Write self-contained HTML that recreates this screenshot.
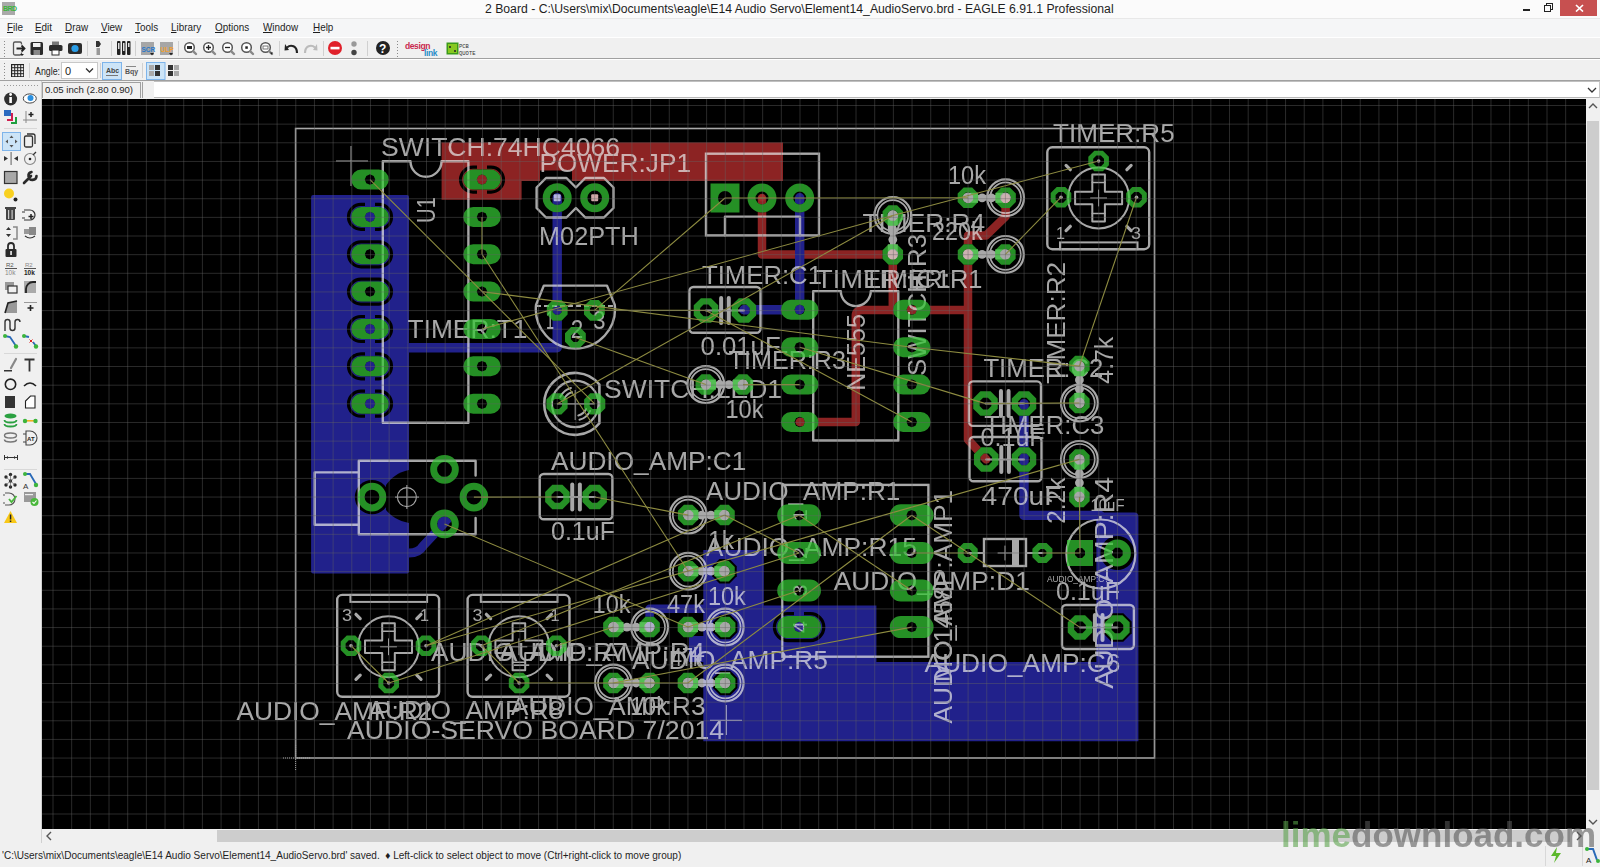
<!DOCTYPE html><html><head><meta charset="utf-8"><style>html,body{margin:0;padding:0;width:1600px;height:867px;overflow:hidden;background:#f0f0f0;font-family:"Liberation Sans",sans-serif;position:relative}</style></head><body>
<div style="position:absolute;left:0;top:0;width:1600px;height:18px;background:#fbfbfb;"></div>
<div style="position:absolute;left:2px;top:2px;width:13px;height:13px;background:#a9a9a9;"></div>
<div style="position:absolute;left:3px;top:5px;font:bold 7px 'Liberation Sans', sans-serif;color:#3cb43c;letter-spacing:-0.5px;">BRD</div>
<div style="position:absolute;left:485px;top:2px;height:16px;white-space:nowrap;font:12.5px 'Liberation Sans', sans-serif;color:#1e1e1e;transform:scaleX(0.977);transform-origin:0 0;" id="title">2 Board - C:\Users\mix\Documents\eagle\E14 Audio Servo\Element14_AudioServo.brd - EAGLE 6.91.1 Professional</div>
<div style="position:absolute;left:1523px;top:9px;width:7px;height:2px;background:#222;"></div>
<div style="position:absolute;left:1546px;top:3px;width:5px;height:5px;border:1px solid #222;"></div>
<div style="position:absolute;left:1544px;top:5px;width:5px;height:5px;border:1px solid #222;background:#fbfbfb;"></div>
<div style="position:absolute;left:1560px;top:0px;width:37px;height:16px;background:#c75050;"></div>
<svg style="position:absolute;left:1575px;top:4px" width="9" height="8"><path d="M1,1 L8,7.5 M8,1 L1,7.5" stroke="#fff" stroke-width="1.7"/></svg>
<div style="position:absolute;left:0;top:18px;width:1600px;height:19px;background:#f5f6f7;border-top:1px solid #e8e8e8;"></div>
<div style="position:absolute;left:7px;top:21px;font:11.5px 'Liberation Sans', sans-serif;color:#1e1e1e;white-space:nowrap;transform:scaleX(0.86);transform-origin:0 0;"><u style="text-decoration-thickness:1px;text-underline-offset:1px">F</u>ile</div>
<div style="position:absolute;left:35px;top:21px;font:11.5px 'Liberation Sans', sans-serif;color:#1e1e1e;white-space:nowrap;transform:scaleX(0.86);transform-origin:0 0;"><u style="text-decoration-thickness:1px;text-underline-offset:1px">E</u>dit</div>
<div style="position:absolute;left:65px;top:21px;font:11.5px 'Liberation Sans', sans-serif;color:#1e1e1e;white-space:nowrap;transform:scaleX(0.86);transform-origin:0 0;"><u style="text-decoration-thickness:1px;text-underline-offset:1px">D</u>raw</div>
<div style="position:absolute;left:101px;top:21px;font:11.5px 'Liberation Sans', sans-serif;color:#1e1e1e;white-space:nowrap;transform:scaleX(0.86);transform-origin:0 0;"><u style="text-decoration-thickness:1px;text-underline-offset:1px">V</u>iew</div>
<div style="position:absolute;left:135px;top:21px;font:11.5px 'Liberation Sans', sans-serif;color:#1e1e1e;white-space:nowrap;transform:scaleX(0.86);transform-origin:0 0;"><u style="text-decoration-thickness:1px;text-underline-offset:1px">T</u>ools</div>
<div style="position:absolute;left:171px;top:21px;font:11.5px 'Liberation Sans', sans-serif;color:#1e1e1e;white-space:nowrap;transform:scaleX(0.86);transform-origin:0 0;"><u style="text-decoration-thickness:1px;text-underline-offset:1px">L</u>ibrary</div>
<div style="position:absolute;left:215px;top:21px;font:11.5px 'Liberation Sans', sans-serif;color:#1e1e1e;white-space:nowrap;transform:scaleX(0.86);transform-origin:0 0;"><u style="text-decoration-thickness:1px;text-underline-offset:1px">O</u>ptions</div>
<div style="position:absolute;left:263px;top:21px;font:11.5px 'Liberation Sans', sans-serif;color:#1e1e1e;white-space:nowrap;transform:scaleX(0.86);transform-origin:0 0;"><u style="text-decoration-thickness:1px;text-underline-offset:1px">W</u>indow</div>
<div style="position:absolute;left:313px;top:21px;font:11.5px 'Liberation Sans', sans-serif;color:#1e1e1e;white-space:nowrap;transform:scaleX(0.86);transform-origin:0 0;"><u style="text-decoration-thickness:1px;text-underline-offset:1px">H</u>elp</div>
<div style="position:absolute;left:0;top:37px;width:1600px;height:22px;background:#f0f0f0;border-top:1px solid #fff;border-bottom:1px solid #a0a0a0;box-sizing:border-box;"></div>
<div style="position:absolute;left:0;top:59px;width:1600px;height:22px;background:#f0f0f0;border-top:1px solid #fff;border-bottom:1px solid #a0a0a0;box-sizing:border-box;"></div>
<div style="position:absolute;left:0;top:81px;width:1600px;height:18px;background:#f0f0f0;"></div>
<div style="position:absolute;left:42px;top:82px;width:99px;height:16px;background:#f0f0f0;border-top:1px solid #a0a0a0;border-left:1px solid #a0a0a0;border-right:1px solid #a0a0a0;box-sizing:border-box;"></div>
<div style="position:absolute;left:45px;top:84px;font:9.6px 'Liberation Sans', sans-serif;color:#1e1e1e;white-space:nowrap;">0.05 inch (2.80 0.90)</div>
<div style="position:absolute;left:142px;top:82px;width:12px;height:16px;background:#f0f0f0;border-left:1px solid #a0a0a0;box-sizing:border-box;"></div>
<div style="position:absolute;left:154px;top:81px;width:1446px;height:17px;background:#fff;border-top:1px solid #c0c0c0;border-bottom:1px solid #b8b8b8;border-right:1px solid #c8c8c8;box-sizing:border-box;"></div>
<svg style="position:absolute;left:1587px;top:86px" width="10" height="8"><path d="M1,2 L5,6 L9,2" stroke="#333" stroke-width="1.3" fill="none"/></svg>
<div style="position:absolute;left:0;top:81px;width:41px;height:762px;background:#f0f0f0;border-right:1px solid #d0d0d0;"></div>
<div style="position:absolute;left:4px;top:85px;width:1px;height:1px;background:#9a9a9a;"></div>
<div style="position:absolute;left:7px;top:85px;width:1px;height:1px;background:#9a9a9a;"></div>
<div style="position:absolute;left:10px;top:85px;width:1px;height:1px;background:#9a9a9a;"></div>
<div style="position:absolute;left:13px;top:85px;width:1px;height:1px;background:#9a9a9a;"></div>
<div style="position:absolute;left:16px;top:85px;width:1px;height:1px;background:#9a9a9a;"></div>
<div style="position:absolute;left:19px;top:85px;width:1px;height:1px;background:#9a9a9a;"></div>
<div style="position:absolute;left:22px;top:85px;width:1px;height:1px;background:#9a9a9a;"></div>
<div style="position:absolute;left:25px;top:85px;width:1px;height:1px;background:#9a9a9a;"></div>
<div style="position:absolute;left:28px;top:85px;width:1px;height:1px;background:#9a9a9a;"></div>
<div style="position:absolute;left:31px;top:85px;width:1px;height:1px;background:#9a9a9a;"></div>
<div style="position:absolute;left:34px;top:85px;width:1px;height:1px;background:#9a9a9a;"></div>
<div style="position:absolute;left:37px;top:85px;width:1px;height:1px;background:#9a9a9a;"></div>
<div style="position:absolute;left:42px;top:829px;width:1544px;height:14px;background:#f0f0f0;"></div>
<div style="position:absolute;left:217px;top:830px;width:1353px;height:12px;background:#cdcdcd;"></div>
<svg style="position:absolute;left:45px;top:831px" width="8" height="10"><path d="M6,1 L2,5 L6,9" stroke="#555" stroke-width="1.4" fill="none"/></svg>
<svg style="position:absolute;left:1575px;top:831px" width="8" height="10"><path d="M2,1 L6,5 L2,9" stroke="#555" stroke-width="1.4" fill="none"/></svg>
<div style="position:absolute;left:1586px;top:99px;width:14px;height:730px;background:#f0f0f0;"></div>
<div style="position:absolute;left:1587px;top:121px;width:12px;height:669px;background:#cdcdcd;"></div>
<svg style="position:absolute;left:1588px;top:102px" width="10" height="8"><path d="M1,6 L5,2 L9,6" stroke="#555" stroke-width="1.4" fill="none"/></svg>
<svg style="position:absolute;left:1588px;top:818px" width="10" height="8"><path d="M1,2 L5,6 L9,2" stroke="#555" stroke-width="1.4" fill="none"/></svg>
<div style="position:absolute;left:0;top:843px;width:1600px;height:24px;background:#f0f0f0;"></div>
<div style="position:absolute;left:2px;top:849px;font:10.5px 'Liberation Sans', sans-serif;color:#1e1e1e;white-space:nowrap;transform:scaleX(0.956);transform-origin:0 0;" id="status">'C:\Users\mix\Documents\eagle\E14 Audio Servo\Element14_AudioServo.brd' saved. &nbsp;&#9830; Left-click to select object to move (Ctrl+right-click to move group)</div>
<div style="position:absolute;left:1545px;top:846px;width:1px;height:20px;background:#d8d8d8;"></div>
<div style="position:absolute;left:1582px;top:846px;width:1px;height:20px;background:#d8d8d8;"></div>
<svg style="position:absolute;left:1549px;top:847px" width="14" height="16"><path d="M8,0 L2,9 L7,9 L5,16 L12,6 L7,6 Z" fill="#5cb82c"/></svg>
<svg style="position:absolute;left:1585px;top:846px" width="15" height="18"><path d="M2,3 L8,3 L12,14" stroke="#2a6ab8" stroke-width="2" fill="none"/><circle cx="2" cy="3" r="2" fill="#3cb43c"/><circle cx="13" cy="15" r="2" fill="#3cb43c"/><text x="1" y="17" font-size="8" font-family="Liberation Sans" fill="#222">A</text></svg>
<svg style="position:absolute;left:0;top:0" width="1600" height="867">
<rect x="4" y="41" width="1" height="1" fill="#8a8a8a"/>
<rect x="397" y="41" width="1" height="1" fill="#8a8a8a"/>
<rect x="4" y="44" width="1" height="1" fill="#8a8a8a"/>
<rect x="397" y="44" width="1" height="1" fill="#8a8a8a"/>
<rect x="4" y="47" width="1" height="1" fill="#8a8a8a"/>
<rect x="397" y="47" width="1" height="1" fill="#8a8a8a"/>
<rect x="4" y="50" width="1" height="1" fill="#8a8a8a"/>
<rect x="397" y="50" width="1" height="1" fill="#8a8a8a"/>
<rect x="4" y="53" width="1" height="1" fill="#8a8a8a"/>
<rect x="397" y="53" width="1" height="1" fill="#8a8a8a"/>
<rect x="4" y="56" width="1" height="1" fill="#8a8a8a"/>
<rect x="397" y="56" width="1" height="1" fill="#8a8a8a"/>
<rect x="4" y="63" width="1" height="1" fill="#8a8a8a"/>
<rect x="4" y="66" width="1" height="1" fill="#8a8a8a"/>
<rect x="4" y="69" width="1" height="1" fill="#8a8a8a"/>
<rect x="4" y="72" width="1" height="1" fill="#8a8a8a"/>
<rect x="4" y="75" width="1" height="1" fill="#8a8a8a"/>
<rect x="4" y="78" width="1" height="1" fill="#8a8a8a"/>
<rect x="87" y="41" width="1" height="15" fill="#d0d0d0"/>
<rect x="111" y="41" width="1" height="15" fill="#d0d0d0"/>
<rect x="135" y="41" width="1" height="15" fill="#d0d0d0"/>
<rect x="178" y="41" width="1" height="15" fill="#d0d0d0"/>
<rect x="279" y="41" width="1" height="15" fill="#d0d0d0"/>
<rect x="323" y="41" width="1" height="15" fill="#d0d0d0"/>
<rect x="367" y="41" width="1" height="15" fill="#d0d0d0"/>
<path d="M21.5,44.5 V43.5 Q21.5,42 20,42 H15 Q13.5,42 13.5,43.5 V53.5 Q13.5,55 15,55 H20 Q21.5,55 21.5,53.5 V52.5" fill="none" stroke="#555" stroke-width="1.3"/>
<path d="M16.5,48.5 H24.5 M21.5,45.5 L24.5,48.5 L21.5,51.5" fill="none" stroke="#222" stroke-width="1.8"/>
<path d="M20,54 h4 l-2,2z" fill="#222"/>
<rect x="30.5" y="42" width="12.5" height="13" rx="1.5" fill="#2b2b2b"/><rect x="33" y="43" width="7.5" height="4" fill="#f0f0f0"/><rect x="33.5" y="50" width="6.5" height="5" fill="#888"/>
<rect x="52" y="41.5" width="7" height="3.5" fill="#777"/><rect x="49" y="45" width="13.5" height="6" rx="1.5" fill="#2b2b2b"/><rect x="52" y="50" width="7" height="5" fill="#fff" stroke="#2b2b2b" stroke-width="1"/>
<rect x="68" y="43" width="14" height="11" rx="2" fill="#2b2b2b"/><circle cx="75" cy="48.5" r="3.6" fill="#2a9ee8"/>
<path d="M96,41 L99,41 L101,44 L99,47 L96,47 Z" fill="#333"/><rect x="96.5" y="48" width="3.5" height="7" fill="#999"/>
<rect x="117" y="41" width="3.5" height="14" rx="1" fill="#222"/><rect x="122" y="41" width="3.5" height="14" rx="1" fill="#222"/><rect x="127" y="41" width="3.5" height="14" rx="1" fill="#222"/>
<rect x="118" y="43" width="1.5" height="6" fill="#ddd"/><rect x="123" y="43" width="1.5" height="8" fill="#ddd"/><rect x="128" y="43" width="1.5" height="4" fill="#ddd"/>
<rect x="141" y="42" width="13" height="13" fill="#a6a6a6"/><text x="141.5" y="52" font-family="Liberation Sans" font-size="6.5" font-weight="bold" fill="#2a78c8">SCR</text><path d="M150,53 L154,53 L152,55.5Z" fill="#222"/>
<rect x="160" y="42" width="13" height="13" fill="#a6a6a6"/><text x="160.5" y="52" font-family="Liberation Sans" font-size="6.5" font-weight="bold" fill="#f0a030">ULP</text><path d="M169,53 L173,53 L171,55.5Z" fill="#222"/>
<circle cx="189.5" cy="47.5" r="4.8" fill="#fff" stroke="#555" stroke-width="1.5"/><path d="M193.3,51.3 L196.0,54.0" stroke="#888" stroke-width="2.4" stroke-linecap="round"/>
<rect x="187.0" y="46.0" width="5" height="3" fill="#222"/>
<circle cx="208.5" cy="47.5" r="4.8" fill="#fff" stroke="#555" stroke-width="1.5"/><path d="M212.3,51.3 L215.0,54.0" stroke="#888" stroke-width="2.4" stroke-linecap="round"/>
<path d="M206.0,47.5 h5 M208.5,45.0 v5" stroke="#222" stroke-width="1.3"/>
<circle cx="227.5" cy="47.5" r="4.8" fill="#fff" stroke="#555" stroke-width="1.5"/><path d="M231.3,51.3 L234.0,54.0" stroke="#888" stroke-width="2.4" stroke-linecap="round"/>
<path d="M225.0,47.5 h5" stroke="#222" stroke-width="1.3"/>
<circle cx="246.5" cy="47.5" r="4.8" fill="#fff" stroke="#555" stroke-width="1.5"/><path d="M250.3,51.3 L253.0,54.0" stroke="#888" stroke-width="2.4" stroke-linecap="round"/>
<rect x="245.3" y="46.3" width="2.5" height="2.5" fill="#222"/>
<circle cx="265.5" cy="47.5" r="4.8" fill="#fff" stroke="#555" stroke-width="1.5"/><path d="M269.3,51.3 L272.0,54.0" stroke="#888" stroke-width="2.4" stroke-linecap="round"/>
<rect x="263.0" y="46.0" width="5" height="3" fill="none" stroke="#777" stroke-width="1"/><path d="M270.0,52.5 l3,0 l-1.5,2z" fill="#222"/>
<path d="M297,53 C297,46 291,44 287,47.5" fill="none" stroke="#222" stroke-width="2.2"/><path d="M285,44 L289,50 L284.5,50.5 Z" fill="#222"/>
<path d="M305,53 C305,46 311,44 315,47.5" fill="none" stroke="#bbb" stroke-width="2.2"/><path d="M317,44 L313,50 L317.5,50.5 Z" fill="#bbb"/>
<circle cx="335" cy="48" r="7" fill="#e0202a"/><rect x="330.5" y="46.8" width="9" height="2.6" fill="#fff"/>
<circle cx="354" cy="44" r="2.7" fill="#999"/><circle cx="354" cy="52.5" r="2.7" fill="#444"/>
<circle cx="383" cy="48" r="7" fill="#222"/><text x="379" y="52.5" font-family="Liberation Sans" font-size="12" font-weight="bold" fill="#fff">?</text>
<text x="405" y="49" font-family="Liberation Sans" font-size="8.5" font-weight="bold" fill="#c8284e" letter-spacing="-0.4">design</text>
<text x="424" y="55.5" font-family="Liberation Sans" font-size="8.5" font-weight="bold" fill="#2a8ec8" letter-spacing="-0.4">link</text>
<rect x="446.5" y="42.5" width="12" height="12" fill="#3a9a1a"/><rect x="448" y="44" width="9" height="9" fill="#88c820"/><circle cx="450" cy="47" r="1" fill="#222"/><circle cx="455" cy="51" r="1" fill="#222"/>
<text x="459" y="48" font-family="Liberation Mono" font-size="5.5" fill="#333">PCB</text><text x="459" y="54.5" font-family="Liberation Mono" font-size="5.5" fill="#333">QUOTE</text>
<rect x="29" y="63" width="1" height="15" fill="#d0d0d0"/><rect x="100" y="63" width="1" height="15" fill="#d0d0d0"/><rect x="142" y="63" width="1" height="15" fill="#d0d0d0"/>
<rect x="11" y="64" width="13" height="13" fill="#222"/>
<rect x="12.2" y="65.2" width="2" height="2" fill="#f0f0f0"/>
<rect x="12.2" y="68.2" width="2" height="2" fill="#f0f0f0"/>
<rect x="12.2" y="71.2" width="2" height="2" fill="#f0f0f0"/>
<rect x="12.2" y="74.2" width="2" height="2" fill="#f0f0f0"/>
<rect x="15.2" y="65.2" width="2" height="2" fill="#f0f0f0"/>
<rect x="15.2" y="68.2" width="2" height="2" fill="#f0f0f0"/>
<rect x="15.2" y="71.2" width="2" height="2" fill="#f0f0f0"/>
<rect x="15.2" y="74.2" width="2" height="2" fill="#f0f0f0"/>
<rect x="18.2" y="65.2" width="2" height="2" fill="#f0f0f0"/>
<rect x="18.2" y="68.2" width="2" height="2" fill="#f0f0f0"/>
<rect x="18.2" y="71.2" width="2" height="2" fill="#f0f0f0"/>
<rect x="18.2" y="74.2" width="2" height="2" fill="#f0f0f0"/>
<rect x="21.2" y="65.2" width="2" height="2" fill="#f0f0f0"/>
<rect x="21.2" y="68.2" width="2" height="2" fill="#f0f0f0"/>
<rect x="21.2" y="71.2" width="2" height="2" fill="#f0f0f0"/>
<rect x="21.2" y="74.2" width="2" height="2" fill="#f0f0f0"/>
<text x="35" y="75" font-family="Liberation Sans" font-size="10.5" textLength="25" lengthAdjust="spacingAndGlyphs" fill="#1e1e1e">Angle:</text>
<rect x="61.5" y="62.5" width="36" height="16" fill="#fff" stroke="#c8c8c8" stroke-width="1"/>
<text x="65" y="75" font-family="Liberation Sans" font-size="11" fill="#1e1e1e">0</text>
<path d="M86,68.5 L89.5,72 L93,68.5" fill="none" stroke="#333" stroke-width="1.3"/>
<rect x="102.5" y="62.5" width="19" height="17" fill="#cce4f7" stroke="#7eb4ea" stroke-width="1"/>
<text x="106" y="73" font-family="Liberation Sans" font-size="7" font-weight="bold" fill="#444">Abc</text><rect x="106" y="75" width="12" height="1" fill="#777"/>
<rect x="126" y="66" width="10" height="1" fill="#888"/><text x="125" y="74" font-family="Liberation Sans" font-size="7" font-weight="bold" fill="#555">Bqy</text>
<rect x="146.5" y="62.5" width="18.5" height="17" fill="#cce4f7" stroke="#7eb4ea" stroke-width="1"/>
<rect x="149" y="65" width="5" height="5" fill="#aaa"/><rect x="155" y="65" width="5" height="5" fill="#333"/><rect x="149" y="71" width="5" height="5" fill="#aaa"/><rect x="155" y="71" width="5" height="5" fill="#333"/>
<rect x="168" y="65" width="5" height="5" fill="#333"/><rect x="174" y="65" width="5" height="5" fill="#aaa"/><rect x="168" y="71" width="5" height="5" fill="#333"/><rect x="174" y="71" width="5" height="5" fill="#aaa"/>
<circle cx="10.6" cy="99" r="6.5" fill="#2f2f2f"/><rect x="9.3" y="97" width="2.6" height="6" fill="#fff"/><circle cx="10.6" cy="94.5" r="1.4" fill="#fff"/>
<ellipse cx="29.8" cy="98.5" rx="6.5" ry="4.6" fill="#fff" stroke="#444" stroke-width="1"/><circle cx="30.5" cy="98" r="3" fill="#2a90e0"/>
<rect x="4" y="110" width="7" height="6" fill="#2a6ac0"/><path d="M12,113 L12,120 L7,120" stroke="#d02050" stroke-width="2" fill="none"/><path d="M16,117 L16,123 L11,123" stroke="#20a040" stroke-width="2" fill="none"/>
<path d="M26,111 L26,123 M23,120 L37,120" stroke="#888" stroke-width="1"/><path d="M31,112 L31,117 M28.5,114.5 L33.5,114.5" stroke="#222" stroke-width="1.5"/>
<rect x="4" y="128" width="33" height="1" fill="#d8d8d8"/><rect x="4" y="353" width="33" height="1" fill="#d8d8d8"/><rect x="4" y="469" width="33" height="1" fill="#d8d8d8"/>
<rect x="2.5" y="132.5" width="18" height="18" fill="#cce4f7" stroke="#7eb4ea" stroke-width="1"/>
<path d="M11.5,135.5 l-2,2.5 h4z M11.5,147.5 l-2,-2.5 h4z M5.5,141.5 l2.5,-2 v4z M17.5,141.5 l-2.5,-2 v4z" fill="#555"/>
<rect x="24.5" y="136" width="8" height="11" rx="1.5" fill="none" stroke="#333" stroke-width="1.3"/><path d="M27,134 h6 a2,2 0 0 1 2,2 v8" fill="none" stroke="#333" stroke-width="1.3"/>
<rect x="10.5" y="152" width="1.2" height="13" fill="#777"/><path d="M4,156 l4,2.5 l-4,2.5z M18,156 l-4,2.5 l4,2.5z" fill="#333"/>
<circle cx="30" cy="159" r="5.5" fill="none" stroke="#888" stroke-width="1.2"/><circle cx="30" cy="159" r="1.3" fill="#222"/><path d="M33,155 l3,-3" stroke="#333" stroke-width="1.2"/>
<rect x="4.5" y="171.5" width="12.5" height="12" fill="#a8a8a8" stroke="#333" stroke-width="1.2"/>
<path d="M24,183 L31,176 M31.5,172 a4,4 0 1 0 5,4" fill="none" stroke="#2a2a2a" stroke-width="2.6" stroke-linecap="round"/>
<circle cx="9" cy="193.5" r="5" fill="#f8d020"/><circle cx="15.5" cy="199.5" r="2" fill="#222"/>
<rect x="6" y="208" width="9" height="12" rx="1" fill="#444"/><rect x="5" y="207" width="11" height="2" fill="#444"/><rect x="8" y="210" width="1.2" height="9" fill="#ccc"/><rect x="11.5" y="210" width="1.2" height="9" fill="#ccc"/>
<path d="M24,210 h6 a5,5 0 0 1 0,10 h-6" fill="none" stroke="#333" stroke-width="1.2"/><path d="M22,212 h3 M22,218 h3" stroke="#333" stroke-width="1.2"/><path d="M31,214 v5 M28.5,216.5 h5" stroke="#222" stroke-width="1.5"/>
<path d="M6,230 l2.5,-3 l2.5,3z M6,234 l2.5,3 l2.5,-3z" fill="#333"/><path d="M13,227 h4 v12 h-4" fill="none" stroke="#888" stroke-width="1.5"/>
<rect x="24" y="229" width="6" height="5" fill="#999"/><rect x="29" y="227" width="7" height="8" fill="#888"/><path d="M25,236 q5,4 10,0" fill="none" stroke="#333" stroke-width="1.2"/>
<rect x="5.5" y="249" width="11" height="8" rx="1" fill="#2a2a2a"/><path d="M8,249 v-3 a3,3 0 0 1 6,0 v3" fill="none" stroke="#2a2a2a" stroke-width="1.8"/><rect x="10.3" y="251" width="1.5" height="4" fill="#fff"/>
<text x="6" y="267" font-family="Liberation Sans" font-size="6" fill="#555">R2</text><rect x="5" y="268" width="12" height="1" fill="#555"/><text x="5" y="275" font-family="Liberation Sans" font-size="6.5" fill="#888">10k</text>
<text x="25" y="267" font-family="Liberation Sans" font-size="6" fill="#888">R2</text><rect x="24" y="268" width="12" height="1" fill="#555"/><text x="24" y="275" font-family="Liberation Sans" font-size="6.5" font-weight="bold" fill="#222">10k</text>
<rect x="5" y="282" width="9" height="8" fill="#999"/><rect x="8" y="286" width="9" height="7" fill="#f0f0f0" stroke="#333" stroke-width="1.2"/>
<path d="M24,281 h12 v12 h-12z" fill="#aaa"/><path d="M26,293 v-4 a7,7 0 0 1 7,-7 h3" fill="none" stroke="#222" stroke-width="1.8"/>
<path d="M5,313 l3,-10 l9,-2 v12z" fill="#999"/><path d="M5,313 l3,-10 l9,-2" fill="none" stroke="#222" stroke-width="1.6"/>
<rect x="24" y="302" width="13" height="1" fill="#999"/><path d="M30.5,305 v6 M27.5,308 h6" stroke="#222" stroke-width="1.6"/>
<path d="M5,331 v-9 a2.5,2.5 0 0 1 5,0 v6 a2.5,2.5 0 0 0 5,0 v-6 a2.5,2.5 0 0 1 5,0" fill="none" stroke="#333" stroke-width="1.4"/>
<path d="M5,336 L10,337 L16,346" fill="none" stroke="#2a6ab8" stroke-width="1.8"/><circle cx="5" cy="336" r="2" fill="#3cb43c"/><circle cx="16" cy="346.5" r="2.2" fill="#3cb43c"/>
<path d="M24,336 L29,337 M33,342 L36,346" fill="none" stroke="#2a6ab8" stroke-width="1.8"/><circle cx="24" cy="336" r="2" fill="#3cb43c"/><circle cx="36" cy="346.5" r="2.2" fill="#3cb43c"/><path d="M29.5,339.5 l3,3 m0,-3 l-3,3" stroke="#e02020" stroke-width="1"/>
<rect x="4" y="370" width="8" height="1.5" fill="#333"/><path d="M11,368 l5,-9" stroke="#888" stroke-width="2.2" stroke-linecap="round"/>
<path d="M24.5,359.5 h10 M29.5,359.5 v12" stroke="#333" stroke-width="1.8"/>
<circle cx="10.5" cy="384.3" r="5.2" fill="none" stroke="#222" stroke-width="1.6"/><path d="M24,386 q6,-6 12,0" fill="none" stroke="#222" stroke-width="1.6"/>
<rect x="5" y="396" width="10" height="12" fill="#333"/><path d="M25.5,408 v-7 l5,-5 h4.5 v12z" fill="#fff" stroke="#222" stroke-width="1.1"/>
<ellipse cx="10.5" cy="416" rx="6" ry="2.5" fill="#2aa040"/><path d="M4.5,420 a6,2.5 0 0 0 12,0" fill="none" stroke="#2aa040" stroke-width="1.8"/><path d="M4.5,424 a6,2.5 0 0 0 12,0" fill="none" stroke="#2aa040" stroke-width="1.8"/>
<rect x="25" y="420" width="10" height="1.6" fill="#f0b020"/><circle cx="25" cy="421" r="2.2" fill="#3cb43c"/><circle cx="35.5" cy="421" r="2.2" fill="#3cb43c"/>
<ellipse cx="10.5" cy="435.5" rx="6" ry="2.5" fill="none" stroke="#777" stroke-width="1.4"/><path d="M4.5,439.5 a6,2.5 0 0 0 12,0" fill="none" stroke="#777" stroke-width="1.6"/>
<path d="M23,434 h3 M23,442 h3 M26,431 h4 a7,7 0 0 1 0,14 h-4z" fill="none" stroke="#444" stroke-width="1.1"/><text x="27" y="441" font-family="Liberation Sans" font-size="6" font-weight="bold" fill="#222">AT</text>
<path d="M5,457.5 h12 M4.5,455 v5 M17.5,455 v5" stroke="#333" stroke-width="1"/><path d="M6,457.5 l2,-1.5 v3z M16,457.5 l-2,-1.5 v3z" fill="#333"/>
<circle cx="6.0" cy="477.0" r="1.7" fill="#2a2a2a"/>
<circle cx="10.5" cy="474.5" r="1.7" fill="#2a2a2a"/>
<circle cx="15.0" cy="477.0" r="1.7" fill="#2a2a2a"/>
<circle cx="6.0" cy="485.0" r="1.7" fill="#2a2a2a"/>
<circle cx="15.0" cy="485.0" r="1.7" fill="#2a2a2a"/>
<circle cx="10.5" cy="487.0" r="1.7" fill="#2a2a2a"/>
<circle cx="10.5" cy="481.0" r="1.7" fill="#2a2a2a"/>
<path d="M6,477 L15,485 M15,477 L6,485 M10.5,474.5 v12.5" stroke="#555" stroke-width="0.6"/>
<path d="M25,474 h5 l6,10" fill="none" stroke="#2a6ab8" stroke-width="1.8"/><circle cx="25" cy="474" r="2" fill="#3cb43c"/><circle cx="36" cy="485" r="2.2" fill="#3cb43c"/><text x="23" y="489" font-family="Liberation Sans" font-size="8" fill="#333">A</text>
<path d="M5,493 h4 a6,6 0 0 1 0,12 h-4" fill="none" stroke="#555" stroke-width="1.1"/><path d="M3,495 h2 M3,503 h2" stroke="#555" stroke-width="1"/><path d="M9,499 l2.5,3 l5,-6" fill="none" stroke="#4ab83c" stroke-width="1.8"/>
<rect x="24" y="492" width="12" height="10" fill="#999"/><rect x="25" y="494" width="8" height="1.2" fill="#eee"/><circle cx="34.5" cy="502" r="4" fill="#4ab83c"/><path d="M32.5,502 l1.5,1.5 l2.5,-3" fill="none" stroke="#fff" stroke-width="1.1"/>
<path d="M10.5,511 L17,523 L4,523 Z" fill="#f8c818"/><rect x="9.8" y="514.5" width="1.5" height="5" fill="#222"/><rect x="9.8" y="520.5" width="1.5" height="1.5" fill="#222"/>
</svg>
<svg style="position:absolute;left:42px;top:99px;will-change:transform" width="1544" height="730">
<g transform="translate(-42,-99)">
<rect x="42" y="99" width="1544" height="730" rx="0" fill="#000"/>
<path d="M441.6,142.5 H783 V181 H572 V170.6 H540 V181 H521.6 V199.7 H441.6 Z" fill="#8c2323"/>
<path d="M762,198 V254.4 H892.8" stroke="#8c2323" stroke-width="8.5" fill="none" stroke-linejoin="round" stroke-linecap="round"/>
<path d="M892.8,254.4 V310 H968" stroke="#8c2323" stroke-width="8.5" fill="none" stroke-linejoin="round" stroke-linecap="round"/>
<path d="M911.8,310 H862 Q855.8,310 855.8,316 V422 H799.7" stroke="#8c2323" stroke-width="8.5" fill="none" stroke-linejoin="round" stroke-linecap="round"/>
<path d="M1005.6,197.8 V216.5 L986,235.5 H968 V439.7 L986.2,459.4" stroke="#8c2323" stroke-width="8.5" fill="none" stroke-linejoin="round" stroke-linecap="round"/>
<path d="M473,167.1 H491 A12.5,12.5 0 0 1 503.5,179.6 V179.6 A12.5,12.5 0 0 1 491,192.1 H473 A12.5,12.5 0 0 1 460.5,179.6 V179.6 A12.5,12.5 0 0 1 473,167.1Z" fill="none" stroke="#000" stroke-width="3.2"/>
<rect x="477" y="164.6" width="10" height="6" rx="0" fill="#8c2323"/>
<rect x="477" y="188.6" width="10" height="6" rx="0" fill="#8c2323"/>
<rect x="311.1" y="195" width="97.9" height="378.4" rx="2" fill="#21218b"/>
<path d="M409,470 C398,472 391,478 386,485 L386,510 C391,516 398,521 409,523 Z" fill="#000"/>
<circle cx="372" cy="497.1" r="17.2" fill="#000"/>
<path d="M444.5,523 L423,546 Q419,553 409,553" stroke="#21218b" stroke-width="9" fill="none" stroke-linejoin="round" stroke-linecap="round"/>
<path d="M409,347.8 H557.2 V197.8" stroke="#21218b" stroke-width="9.4" fill="none" stroke-linejoin="round" stroke-linecap="round"/>
<path d="M799.7,197.8 V309.8 H743.9" stroke="#21218b" stroke-width="9.4" fill="none" stroke-linejoin="round" stroke-linecap="round"/>
<path d="M1024,403.6 V515.4 H1100" stroke="#21218b" stroke-width="9.4" fill="none" stroke-linejoin="round" stroke-linecap="round"/>
<path d="M1096.4,512.6 H1134.4 Q1138.4,512.6 1138.4,516.6 V741.3 H703.3 V550.1 H763.8 V605.5 H876.4 V662 H1096.4 Z" fill="#21218b"/>
<path d="M649.6,627.1 V608.8 H703.3" stroke="#21218b" stroke-width="8.5" fill="none" stroke-linejoin="round" stroke-linecap="round"/>
<rect x="689" y="636" width="15" height="26" rx="0" fill="#21218b"/>
<path d="M719.43,558.95 L729.57,558.95 L736.75,566.13 L736.75,576.27 L729.57,583.45 L719.43,583.45 L712.25,576.27 L712.25,566.13Z" fill="#000" fill-rule="evenodd"/>
<path d="M720.13,614.85 L730.27,614.85 L737.45,622.03 L737.45,632.17 L730.27,639.35 L720.13,639.35 L712.95,632.17 L712.95,622.03Z" fill="#000" fill-rule="evenodd"/>
<path d="M720.13,670.75 L730.27,670.75 L737.45,677.93 L737.45,688.07 L730.27,695.25 L720.13,695.25 L712.95,688.07 L712.95,677.93Z" fill="#000" fill-rule="evenodd"/>
<path d="M1111.5,613.15 L1123.3,613.15 L1131.65,621.5 L1131.65,633.3 L1123.3,641.65 L1111.5,641.65 L1103.15,633.3 L1103.15,621.5Z" fill="#000" fill-rule="evenodd"/>
<circle cx="1117.4" cy="553" r="17" fill="#000"/>
<path d="M787.9,613.6 H810.3 A13.5,13.5 0 0 1 823.8,627.1 V627.1 A13.5,13.5 0 0 1 810.3,640.6 H787.9 A13.5,13.5 0 0 1 774.4,627.1 V627.1 A13.5,13.5 0 0 1 787.9,613.6Z" fill="none" stroke="#000" stroke-width="3.2"/>
<rect x="794" y="611.1" width="10" height="6" rx="0" fill="#21218b"/>
<path d="M361,204.4 H379 A12.5,12.5 0 0 1 391.5,216.9 V216.9 A12.5,12.5 0 0 1 379,229.4 H361 A12.5,12.5 0 0 1 348.5,216.9 V216.9 A12.5,12.5 0 0 1 361,204.4Z" fill="none" stroke="#000" stroke-width="3.2"/>
<rect x="365" y="201.9" width="10" height="6" rx="0" fill="#21218b"/>
<rect x="365" y="225.9" width="10" height="6" rx="0" fill="#21218b"/>
<path d="M361,241.8 H379 A12.5,12.5 0 0 1 391.5,254.3 V254.3 A12.5,12.5 0 0 1 379,266.8 H361 A12.5,12.5 0 0 1 348.5,254.3 V254.3 A12.5,12.5 0 0 1 361,241.8Z" fill="none" stroke="#000" stroke-width="3.2"/>
<path d="M361,279.1 H379 A12.5,12.5 0 0 1 391.5,291.6 V291.6 A12.5,12.5 0 0 1 379,304.1 H361 A12.5,12.5 0 0 1 348.5,291.6 V291.6 A12.5,12.5 0 0 1 361,279.1Z" fill="none" stroke="#000" stroke-width="3.2"/>
<path d="M361,316.5 H379 A12.5,12.5 0 0 1 391.5,329 V329 A12.5,12.5 0 0 1 379,341.5 H361 A12.5,12.5 0 0 1 348.5,329 V329 A12.5,12.5 0 0 1 361,316.5Z" fill="none" stroke="#000" stroke-width="3.2"/>
<rect x="365" y="314" width="10" height="6" rx="0" fill="#21218b"/>
<rect x="365" y="338" width="10" height="6" rx="0" fill="#21218b"/>
<path d="M361,353.8 H379 A12.5,12.5 0 0 1 391.5,366.3 V366.3 A12.5,12.5 0 0 1 379,378.8 H361 A12.5,12.5 0 0 1 348.5,366.3 V366.3 A12.5,12.5 0 0 1 361,353.8Z" fill="none" stroke="#000" stroke-width="3.2"/>
<rect x="365" y="351.3" width="10" height="6" rx="0" fill="#21218b"/>
<rect x="365" y="375.3" width="10" height="6" rx="0" fill="#21218b"/>
<path d="M361,391.2 H379 A12.5,12.5 0 0 1 391.5,403.7 V403.7 A12.5,12.5 0 0 1 379,416.2 H361 A12.5,12.5 0 0 1 348.5,403.7 V403.7 A12.5,12.5 0 0 1 361,391.2Z" fill="none" stroke="#000" stroke-width="3.2"/>
<rect x="365" y="388.7" width="10" height="6" rx="0" fill="#21218b"/>
<rect x="365" y="412.7" width="10" height="6" rx="0" fill="#21218b"/>
<path d="M370,248.8 L373.89,250.41 L375.5,254.3 L373.89,258.19 L370,259.8 L366.11,258.19 L364.5,254.3 L366.11,250.41Z" fill="#000" fill-rule="evenodd"/>
<path d="M370,286.1 L373.89,287.71 L375.5,291.6 L373.89,295.49 L370,297.1 L366.11,295.49 L364.5,291.6 L366.11,287.71Z" fill="#000" fill-rule="evenodd"/>
<rect x="438" y="516" width="11" height="12" rx="0" fill="#21218b" transform="rotate(45 444.5 522)"/>
<g fill="#000" fill-rule="evenodd">
<path d="M361.25,169.6 H378.75 A10,10 0 0 1 388.75,179.6 V179.6 A10,10 0 0 1 378.75,189.6 H361.25 A10,10 0 0 1 351.25,179.6 V179.6 A10,10 0 0 1 361.25,169.6ZM370,174.35 L373.71,175.89 L375.25,179.6 L373.71,183.31 L370,184.85 L366.29,183.31 L364.75,179.6 L366.29,175.89Z"/>
<path d="M361.25,206.9 H378.75 A10,10 0 0 1 388.75,216.9 V216.9 A10,10 0 0 1 378.75,226.9 H361.25 A10,10 0 0 1 351.25,216.9 V216.9 A10,10 0 0 1 361.25,206.9ZM370,211.65 L373.71,213.19 L375.25,216.9 L373.71,220.61 L370,222.15 L366.29,220.61 L364.75,216.9 L366.29,213.19Z"/>
<path d="M361.25,244.3 H378.75 A10,10 0 0 1 388.75,254.3 V254.3 A10,10 0 0 1 378.75,264.3 H361.25 A10,10 0 0 1 351.25,254.3 V254.3 A10,10 0 0 1 361.25,244.3ZM370,249.05 L373.71,250.59 L375.25,254.3 L373.71,258.01 L370,259.55 L366.29,258.01 L364.75,254.3 L366.29,250.59Z"/>
<path d="M361.25,281.6 H378.75 A10,10 0 0 1 388.75,291.6 V291.6 A10,10 0 0 1 378.75,301.6 H361.25 A10,10 0 0 1 351.25,291.6 V291.6 A10,10 0 0 1 361.25,281.6ZM370,286.35 L373.71,287.89 L375.25,291.6 L373.71,295.31 L370,296.85 L366.29,295.31 L364.75,291.6 L366.29,287.89Z"/>
<path d="M361.25,319 H378.75 A10,10 0 0 1 388.75,329 V329 A10,10 0 0 1 378.75,339 H361.25 A10,10 0 0 1 351.25,329 V329 A10,10 0 0 1 361.25,319ZM370,323.75 L373.71,325.29 L375.25,329 L373.71,332.71 L370,334.25 L366.29,332.71 L364.75,329 L366.29,325.29Z"/>
<path d="M361.25,356.3 H378.75 A10,10 0 0 1 388.75,366.3 V366.3 A10,10 0 0 1 378.75,376.3 H361.25 A10,10 0 0 1 351.25,366.3 V366.3 A10,10 0 0 1 361.25,356.3ZM370,361.05 L373.71,362.59 L375.25,366.3 L373.71,370.01 L370,371.55 L366.29,370.01 L364.75,366.3 L366.29,362.59Z"/>
<path d="M361.25,393.7 H378.75 A10,10 0 0 1 388.75,403.7 V403.7 A10,10 0 0 1 378.75,413.7 H361.25 A10,10 0 0 1 351.25,403.7 V403.7 A10,10 0 0 1 361.25,393.7ZM370,398.45 L373.71,399.99 L375.25,403.7 L373.71,407.41 L370,408.95 L366.29,407.41 L364.75,403.7 L366.29,399.99Z"/>
<path d="M473.25,169.6 H490.75 A10,10 0 0 1 500.75,179.6 V179.6 A10,10 0 0 1 490.75,189.6 H473.25 A10,10 0 0 1 463.25,179.6 V179.6 A10,10 0 0 1 473.25,169.6ZM482,174.35 L485.71,175.89 L487.25,179.6 L485.71,183.31 L482,184.85 L478.29,183.31 L476.75,179.6 L478.29,175.89Z"/>
<path d="M473.25,206.9 H490.75 A10,10 0 0 1 500.75,216.9 V216.9 A10,10 0 0 1 490.75,226.9 H473.25 A10,10 0 0 1 463.25,216.9 V216.9 A10,10 0 0 1 473.25,206.9ZM482,211.65 L485.71,213.19 L487.25,216.9 L485.71,220.61 L482,222.15 L478.29,220.61 L476.75,216.9 L478.29,213.19Z"/>
<path d="M473.25,244.3 H490.75 A10,10 0 0 1 500.75,254.3 V254.3 A10,10 0 0 1 490.75,264.3 H473.25 A10,10 0 0 1 463.25,254.3 V254.3 A10,10 0 0 1 473.25,244.3ZM482,249.05 L485.71,250.59 L487.25,254.3 L485.71,258.01 L482,259.55 L478.29,258.01 L476.75,254.3 L478.29,250.59Z"/>
<path d="M473.25,281.6 H490.75 A10,10 0 0 1 500.75,291.6 V291.6 A10,10 0 0 1 490.75,301.6 H473.25 A10,10 0 0 1 463.25,291.6 V291.6 A10,10 0 0 1 473.25,281.6ZM482,286.35 L485.71,287.89 L487.25,291.6 L485.71,295.31 L482,296.85 L478.29,295.31 L476.75,291.6 L478.29,287.89Z"/>
<path d="M473.25,319 H490.75 A10,10 0 0 1 500.75,329 V329 A10,10 0 0 1 490.75,339 H473.25 A10,10 0 0 1 463.25,329 V329 A10,10 0 0 1 473.25,319ZM482,323.75 L485.71,325.29 L487.25,329 L485.71,332.71 L482,334.25 L478.29,332.71 L476.75,329 L478.29,325.29Z"/>
<path d="M473.25,356.3 H490.75 A10,10 0 0 1 500.75,366.3 V366.3 A10,10 0 0 1 490.75,376.3 H473.25 A10,10 0 0 1 463.25,366.3 V366.3 A10,10 0 0 1 473.25,356.3ZM482,361.05 L485.71,362.59 L487.25,366.3 L485.71,370.01 L482,371.55 L478.29,370.01 L476.75,366.3 L478.29,362.59Z"/>
<path d="M473.25,393.7 H490.75 A10,10 0 0 1 500.75,403.7 V403.7 A10,10 0 0 1 490.75,413.7 H473.25 A10,10 0 0 1 463.25,403.7 V403.7 A10,10 0 0 1 473.25,393.7ZM482,398.45 L485.71,399.99 L487.25,403.7 L485.71,407.41 L482,408.95 L478.29,407.41 L476.75,403.7 L478.29,399.99Z"/>
<path d="M790.95,299.8 H808.45 A10,10 0 0 1 818.45,309.8 V309.8 A10,10 0 0 1 808.45,319.8 H790.95 A10,10 0 0 1 780.95,309.8 V309.8 A10,10 0 0 1 790.95,299.8ZM799.7,304.55 L803.41,306.09 L804.95,309.8 L803.41,313.51 L799.7,315.05 L795.99,313.51 L794.45,309.8 L795.99,306.09Z"/>
<path d="M790.95,337.2 H808.45 A10,10 0 0 1 818.45,347.2 V347.2 A10,10 0 0 1 808.45,357.2 H790.95 A10,10 0 0 1 780.95,347.2 V347.2 A10,10 0 0 1 790.95,337.2ZM799.7,341.95 L803.41,343.49 L804.95,347.2 L803.41,350.91 L799.7,352.45 L795.99,350.91 L794.45,347.2 L795.99,343.49Z"/>
<path d="M790.95,374.6 H808.45 A10,10 0 0 1 818.45,384.6 V384.6 A10,10 0 0 1 808.45,394.6 H790.95 A10,10 0 0 1 780.95,384.6 V384.6 A10,10 0 0 1 790.95,374.6ZM799.7,379.35 L803.41,380.89 L804.95,384.6 L803.41,388.31 L799.7,389.85 L795.99,388.31 L794.45,384.6 L795.99,380.89Z"/>
<path d="M790.95,412 H808.45 A10,10 0 0 1 818.45,422 V422 A10,10 0 0 1 808.45,432 H790.95 A10,10 0 0 1 780.95,422 V422 A10,10 0 0 1 790.95,412ZM799.7,416.75 L803.41,418.29 L804.95,422 L803.41,425.71 L799.7,427.25 L795.99,425.71 L794.45,422 L795.99,418.29Z"/>
<path d="M903.05,299.8 H920.55 A10,10 0 0 1 930.55,309.8 V309.8 A10,10 0 0 1 920.55,319.8 H903.05 A10,10 0 0 1 893.05,309.8 V309.8 A10,10 0 0 1 903.05,299.8ZM911.8,304.55 L915.51,306.09 L917.05,309.8 L915.51,313.51 L911.8,315.05 L908.09,313.51 L906.55,309.8 L908.09,306.09Z"/>
<path d="M903.05,337.2 H920.55 A10,10 0 0 1 930.55,347.2 V347.2 A10,10 0 0 1 920.55,357.2 H903.05 A10,10 0 0 1 893.05,347.2 V347.2 A10,10 0 0 1 903.05,337.2ZM911.8,341.95 L915.51,343.49 L917.05,347.2 L915.51,350.91 L911.8,352.45 L908.09,350.91 L906.55,347.2 L908.09,343.49Z"/>
<path d="M903.05,374.6 H920.55 A10,10 0 0 1 930.55,384.6 V384.6 A10,10 0 0 1 920.55,394.6 H903.05 A10,10 0 0 1 893.05,384.6 V384.6 A10,10 0 0 1 903.05,374.6ZM911.8,379.35 L915.51,380.89 L917.05,384.6 L915.51,388.31 L911.8,389.85 L908.09,388.31 L906.55,384.6 L908.09,380.89Z"/>
<path d="M903.05,412 H920.55 A10,10 0 0 1 930.55,422 V422 A10,10 0 0 1 920.55,432 H903.05 A10,10 0 0 1 893.05,422 V422 A10,10 0 0 1 903.05,412ZM911.8,416.75 L915.51,418.29 L917.05,422 L915.51,425.71 L911.8,427.25 L908.09,425.71 L906.55,422 L908.09,418.29Z"/>
<path d="M788.2,504.3 H810 A11,11 0 0 1 821,515.3 V515.3 A11,11 0 0 1 810,526.3 H788.2 A11,11 0 0 1 777.2,515.3 V515.3 A11,11 0 0 1 788.2,504.3ZM799.1,510.05 L802.81,511.59 L804.35,515.3 L802.81,519.01 L799.1,520.55 L795.39,519.01 L793.85,515.3 L795.39,511.59Z"/>
<path d="M788.2,542 H810 A11,11 0 0 1 821,553 V553 A11,11 0 0 1 810,564 H788.2 A11,11 0 0 1 777.2,553 V553 A11,11 0 0 1 788.2,542ZM799.1,547.75 L802.81,549.29 L804.35,553 L802.81,556.71 L799.1,558.25 L795.39,556.71 L793.85,553 L795.39,549.29Z"/>
<path d="M788.2,579.5 H810 A11,11 0 0 1 821,590.5 V590.5 A11,11 0 0 1 810,601.5 H788.2 A11,11 0 0 1 777.2,590.5 V590.5 A11,11 0 0 1 788.2,579.5ZM799.1,585.25 L802.81,586.79 L804.35,590.5 L802.81,594.21 L799.1,595.75 L795.39,594.21 L793.85,590.5 L795.39,586.79Z"/>
<path d="M788.2,616.1 H810 A11,11 0 0 1 821,627.1 V627.1 A11,11 0 0 1 810,638.1 H788.2 A11,11 0 0 1 777.2,627.1 V627.1 A11,11 0 0 1 788.2,616.1ZM799.1,621.85 L802.81,623.39 L804.35,627.1 L802.81,630.81 L799.1,632.35 L795.39,630.81 L793.85,627.1 L795.39,623.39Z"/>
<path d="M900.8,504.3 H922.6 A11,11 0 0 1 933.6,515.3 V515.3 A11,11 0 0 1 922.6,526.3 H900.8 A11,11 0 0 1 889.8,515.3 V515.3 A11,11 0 0 1 900.8,504.3ZM911.7,510.05 L915.41,511.59 L916.95,515.3 L915.41,519.01 L911.7,520.55 L907.99,519.01 L906.45,515.3 L907.99,511.59Z"/>
<path d="M900.8,542 H922.6 A11,11 0 0 1 933.6,553 V553 A11,11 0 0 1 922.6,564 H900.8 A11,11 0 0 1 889.8,553 V553 A11,11 0 0 1 900.8,542ZM911.7,547.75 L915.41,549.29 L916.95,553 L915.41,556.71 L911.7,558.25 L907.99,556.71 L906.45,553 L907.99,549.29Z"/>
<path d="M900.8,579.5 H922.6 A11,11 0 0 1 933.6,590.5 V590.5 A11,11 0 0 1 922.6,601.5 H900.8 A11,11 0 0 1 889.8,590.5 V590.5 A11,11 0 0 1 900.8,579.5ZM911.7,585.25 L915.41,586.79 L916.95,590.5 L915.41,594.21 L911.7,595.75 L907.99,594.21 L906.45,590.5 L907.99,586.79Z"/>
<path d="M900.8,616.1 H922.6 A11,11 0 0 1 933.6,627.1 V627.1 A11,11 0 0 1 922.6,638.1 H900.8 A11,11 0 0 1 889.8,627.1 V627.1 A11,11 0 0 1 900.8,616.1ZM911.7,621.85 L915.41,623.39 L916.95,627.1 L915.41,630.81 L911.7,632.35 L907.99,630.81 L906.45,627.1 L907.99,623.39Z"/>
<path d="M542.7,197.8 a14.5,14.5 0 1 0 29,0 a14.5,14.5 0 1 0 -29,0ZM549.9,197.8 a7.3,7.3 0 1 0 14.6,0 a7.3,7.3 0 1 0 -14.6,0Z"/>
<path d="M580.2,197.8 a14.5,14.5 0 1 0 29,0 a14.5,14.5 0 1 0 -29,0ZM587.4,197.8 a7.3,7.3 0 1 0 14.6,0 a7.3,7.3 0 1 0 -14.6,0Z"/>
<path d="M710.5,183.5 H739.5 V212.5 H710.5ZM718,198 a7,7 0 1 0 14,0 a7,7 0 1 0 -14,0Z"/>
<path d="M747.5,198 a14.5,14.5 0 1 0 29,0 a14.5,14.5 0 1 0 -29,0ZM755.5,198 a6.5,6.5 0 1 0 13,0 a6.5,6.5 0 1 0 -13,0Z"/>
<path d="M785.2,198 a14.5,14.5 0 1 0 29,0 a14.5,14.5 0 1 0 -29,0ZM793.2,198 a6.5,6.5 0 1 0 13,0 a6.5,6.5 0 1 0 -13,0Z"/>
<path d="M552.89,299.9 L561.51,299.9 L567.6,305.99 L567.6,314.61 L561.51,320.7 L552.89,320.7 L546.8,314.61 L546.8,305.99ZM555.34,305.8 L559.06,305.8 L561.7,308.44 L561.7,312.16 L559.06,314.8 L555.34,314.8 L552.7,312.16 L552.7,308.44Z"/>
<path d="M590.09,299.9 L598.71,299.9 L604.8,305.99 L604.8,314.61 L598.71,320.7 L590.09,320.7 L584,314.61 L584,305.99ZM592.54,305.8 L596.26,305.8 L598.9,308.44 L598.9,312.16 L596.26,314.8 L592.54,314.8 L589.9,312.16 L589.9,308.44Z"/>
<path d="M571.09,327.1 L579.71,327.1 L585.8,333.19 L585.8,341.81 L579.71,347.9 L571.09,347.9 L565,341.81 L565,333.19ZM573.54,333 L577.26,333 L579.9,335.64 L579.9,339.36 L577.26,342 L573.54,342 L570.9,339.36 L570.9,335.64Z"/>
<path d="M552.61,393.3 L561.39,393.3 L567.6,399.51 L567.6,408.29 L561.39,414.5 L552.61,414.5 L546.4,408.29 L546.4,399.51ZM554.93,398.9 L559.07,398.9 L562,401.83 L562,405.97 L559.07,408.9 L554.93,408.9 L552,405.97 L552,401.83Z"/>
<path d="M590.31,393.3 L599.09,393.3 L605.3,399.51 L605.3,408.29 L599.09,414.5 L590.31,414.5 L584.1,408.29 L584.1,399.51ZM592.63,398.9 L596.77,398.9 L599.7,401.83 L599.7,405.97 L596.77,408.9 L592.63,408.9 L589.7,405.97 L589.7,401.83Z"/>
<path d="M700.93,298.15 L711.07,298.15 L718.25,305.33 L718.25,315.47 L711.07,322.65 L700.93,322.65 L693.75,315.47 L693.75,305.33ZM703.58,304.55 L708.42,304.55 L711.85,307.98 L711.85,312.82 L708.42,316.25 L703.58,316.25 L700.15,312.82 L700.15,307.98Z"/>
<path d="M738.83,298.15 L748.97,298.15 L756.15,305.33 L756.15,315.47 L748.97,322.65 L738.83,322.65 L731.65,315.47 L731.65,305.33ZM741.48,304.55 L746.32,304.55 L749.75,307.98 L749.75,312.82 L746.32,316.25 L741.48,316.25 L738.05,312.82 L738.05,307.98Z"/>
<path d="M980.43,391.35 L990.57,391.35 L997.75,398.53 L997.75,408.67 L990.57,415.85 L980.43,415.85 L973.25,408.67 L973.25,398.53ZM983.08,397.75 L987.92,397.75 L991.35,401.18 L991.35,406.02 L987.92,409.45 L983.08,409.45 L979.65,406.02 L979.65,401.18Z"/>
<path d="M1018.93,391.35 L1029.07,391.35 L1036.25,398.53 L1036.25,408.67 L1029.07,415.85 L1018.93,415.85 L1011.75,408.67 L1011.75,398.53ZM1021.58,397.75 L1026.42,397.75 L1029.85,401.18 L1029.85,406.02 L1026.42,409.45 L1021.58,409.45 L1018.15,406.02 L1018.15,401.18Z"/>
<path d="M981.13,447.15 L991.27,447.15 L998.45,454.33 L998.45,464.47 L991.27,471.65 L981.13,471.65 L973.95,464.47 L973.95,454.33ZM983.78,453.55 L988.62,453.55 L992.05,456.98 L992.05,461.82 L988.62,465.25 L983.78,465.25 L980.35,461.82 L980.35,456.98Z"/>
<path d="M1018.93,447.15 L1029.07,447.15 L1036.25,454.33 L1036.25,464.47 L1029.07,471.65 L1018.93,471.65 L1011.75,464.47 L1011.75,454.33ZM1021.58,453.55 L1026.42,453.55 L1029.85,456.98 L1029.85,461.82 L1026.42,465.25 L1021.58,465.25 L1018.15,461.82 L1018.15,456.98Z"/>
<path d="M552.33,484.75 L562.47,484.75 L569.65,491.93 L569.65,502.07 L562.47,509.25 L552.33,509.25 L545.15,502.07 L545.15,491.93ZM554.98,491.15 L559.82,491.15 L563.25,494.58 L563.25,499.42 L559.82,502.85 L554.98,502.85 L551.55,499.42 L551.55,494.58Z"/>
<path d="M589.63,484.75 L599.77,484.75 L606.95,491.93 L606.95,502.07 L599.77,509.25 L589.63,509.25 L582.45,502.07 L582.45,491.93ZM592.28,491.15 L597.12,491.15 L600.55,494.58 L600.55,499.42 L597.12,502.85 L592.28,502.85 L588.85,499.42 L588.85,494.58Z"/>
<path d="M1074.93,615.15 L1085.07,615.15 L1092.25,622.33 L1092.25,632.47 L1085.07,639.65 L1074.93,639.65 L1067.75,632.47 L1067.75,622.33ZM1077.58,621.55 L1082.42,621.55 L1085.85,624.98 L1085.85,629.82 L1082.42,633.25 L1077.58,633.25 L1074.15,629.82 L1074.15,624.98Z"/>
<path d="M1112.33,615.15 L1122.47,615.15 L1129.65,622.33 L1129.65,632.47 L1122.47,639.65 L1112.33,639.65 L1105.15,632.47 L1105.15,622.33ZM1114.98,621.55 L1119.82,621.55 L1123.25,624.98 L1123.25,629.82 L1119.82,633.25 L1114.98,633.25 L1111.55,629.82 L1111.55,624.98Z"/>
<path d="M963.65,187.55 L972.15,187.55 L978.15,193.55 L978.15,202.05 L972.15,208.05 L963.65,208.05 L957.65,202.05 L957.65,193.55ZM965.75,192.6 L970.05,192.6 L973.1,195.65 L973.1,199.95 L970.05,203 L965.75,203 L962.7,199.95 L962.7,195.65Z"/>
<path d="M1001.35,187.55 L1009.85,187.55 L1015.85,193.55 L1015.85,202.05 L1009.85,208.05 L1001.35,208.05 L995.35,202.05 L995.35,193.55ZM1003.45,192.6 L1007.75,192.6 L1010.8,195.65 L1010.8,199.95 L1007.75,203 L1003.45,203 L1000.4,199.95 L1000.4,195.65Z"/>
<path d="M963.75,244.15 L972.25,244.15 L978.25,250.15 L978.25,258.65 L972.25,264.65 L963.75,264.65 L957.75,258.65 L957.75,250.15ZM965.85,249.2 L970.15,249.2 L973.2,252.25 L973.2,256.55 L970.15,259.6 L965.85,259.6 L962.8,256.55 L962.8,252.25Z"/>
<path d="M1001.15,244.15 L1009.65,244.15 L1015.65,250.15 L1015.65,258.65 L1009.65,264.65 L1001.15,264.65 L995.15,258.65 L995.15,250.15ZM1003.25,249.2 L1007.55,249.2 L1010.6,252.25 L1010.6,256.55 L1007.55,259.6 L1003.25,259.6 L1000.2,256.55 L1000.2,252.25Z"/>
<path d="M701.55,374.35 L710.05,374.35 L716.05,380.35 L716.05,388.85 L710.05,394.85 L701.55,394.85 L695.55,388.85 L695.55,380.35ZM703.65,379.4 L707.95,379.4 L711,382.45 L711,386.75 L707.95,389.8 L703.65,389.8 L700.6,386.75 L700.6,382.45Z"/>
<path d="M738.75,374.35 L747.25,374.35 L753.25,380.35 L753.25,388.85 L747.25,394.85 L738.75,394.85 L732.75,388.85 L732.75,380.35ZM740.85,379.4 L745.15,379.4 L748.2,382.45 L748.2,386.75 L745.15,389.8 L740.85,389.8 L737.8,386.75 L737.8,382.45Z"/>
<path d="M683.95,504.85 L692.45,504.85 L698.45,510.85 L698.45,519.35 L692.45,525.35 L683.95,525.35 L677.95,519.35 L677.95,510.85ZM686.05,509.9 L690.35,509.9 L693.4,512.95 L693.4,517.25 L690.35,520.3 L686.05,520.3 L683,517.25 L683,512.95Z"/>
<path d="M720.25,504.85 L728.75,504.85 L734.75,510.85 L734.75,519.35 L728.75,525.35 L720.25,525.35 L714.25,519.35 L714.25,510.85ZM722.35,509.9 L726.65,509.9 L729.7,512.95 L729.7,517.25 L726.65,520.3 L722.35,520.3 L719.3,517.25 L719.3,512.95Z"/>
<path d="M683.95,560.95 L692.45,560.95 L698.45,566.95 L698.45,575.45 L692.45,581.45 L683.95,581.45 L677.95,575.45 L677.95,566.95ZM686.05,566 L690.35,566 L693.4,569.05 L693.4,573.35 L690.35,576.4 L686.05,576.4 L683,573.35 L683,569.05Z"/>
<path d="M720.25,560.95 L728.75,560.95 L734.75,566.95 L734.75,575.45 L728.75,581.45 L720.25,581.45 L714.25,575.45 L714.25,566.95ZM722.35,566 L726.65,566 L729.7,569.05 L729.7,573.35 L726.65,576.4 L722.35,576.4 L719.3,573.35 L719.3,569.05Z"/>
<path d="M609.15,616.85 L617.65,616.85 L623.65,622.85 L623.65,631.35 L617.65,637.35 L609.15,637.35 L603.15,631.35 L603.15,622.85ZM611.25,621.9 L615.55,621.9 L618.6,624.95 L618.6,629.25 L615.55,632.3 L611.25,632.3 L608.2,629.25 L608.2,624.95Z"/>
<path d="M645.35,616.85 L653.85,616.85 L659.85,622.85 L659.85,631.35 L653.85,637.35 L645.35,637.35 L639.35,631.35 L639.35,622.85ZM647.45,621.9 L651.75,621.9 L654.8,624.95 L654.8,629.25 L651.75,632.3 L647.45,632.3 L644.4,629.25 L644.4,624.95Z"/>
<path d="M683.65,616.85 L692.15,616.85 L698.15,622.85 L698.15,631.35 L692.15,637.35 L683.65,637.35 L677.65,631.35 L677.65,622.85ZM685.75,621.9 L690.05,621.9 L693.1,624.95 L693.1,629.25 L690.05,632.3 L685.75,632.3 L682.7,629.25 L682.7,624.95Z"/>
<path d="M720.95,616.85 L729.45,616.85 L735.45,622.85 L735.45,631.35 L729.45,637.35 L720.95,637.35 L714.95,631.35 L714.95,622.85ZM723.05,621.9 L727.35,621.9 L730.4,624.95 L730.4,629.25 L727.35,632.3 L723.05,632.3 L720,629.25 L720,624.95Z"/>
<path d="M609.15,672.75 L617.65,672.75 L623.65,678.75 L623.65,687.25 L617.65,693.25 L609.15,693.25 L603.15,687.25 L603.15,678.75ZM611.25,677.8 L615.55,677.8 L618.6,680.85 L618.6,685.15 L615.55,688.2 L611.25,688.2 L608.2,685.15 L608.2,680.85Z"/>
<path d="M645.35,672.75 L653.85,672.75 L659.85,678.75 L659.85,687.25 L653.85,693.25 L645.35,693.25 L639.35,687.25 L639.35,678.75ZM647.45,677.8 L651.75,677.8 L654.8,680.85 L654.8,685.15 L651.75,688.2 L647.45,688.2 L644.4,685.15 L644.4,680.85Z"/>
<path d="M683.65,672.75 L692.15,672.75 L698.15,678.75 L698.15,687.25 L692.15,693.25 L683.65,693.25 L677.65,687.25 L677.65,678.75ZM685.75,677.8 L690.05,677.8 L693.1,680.85 L693.1,685.15 L690.05,688.2 L685.75,688.2 L682.7,685.15 L682.7,680.85Z"/>
<path d="M720.95,672.75 L729.45,672.75 L735.45,678.75 L735.45,687.25 L729.45,693.25 L720.95,693.25 L714.95,687.25 L714.95,678.75ZM723.05,677.8 L727.35,677.8 L730.4,680.85 L730.4,685.15 L727.35,688.2 L723.05,688.2 L720,685.15 L720,680.85Z"/>
<path d="M888.55,205.25 L897.05,205.25 L903.05,211.25 L903.05,219.75 L897.05,225.75 L888.55,225.75 L882.55,219.75 L882.55,211.25ZM890.65,210.3 L894.95,210.3 L898,213.35 L898,217.65 L894.95,220.7 L890.65,220.7 L887.6,217.65 L887.6,213.35Z"/>
<path d="M888.55,244.15 L897.05,244.15 L903.05,250.15 L903.05,258.65 L897.05,264.65 L888.55,264.65 L882.55,258.65 L882.55,250.15ZM890.65,249.2 L894.95,249.2 L898,252.25 L898,256.55 L894.95,259.6 L890.65,259.6 L887.6,256.55 L887.6,252.25Z"/>
<path d="M1075.15,355.85 L1083.65,355.85 L1089.65,361.85 L1089.65,370.35 L1083.65,376.35 L1075.15,376.35 L1069.15,370.35 L1069.15,361.85ZM1077.25,360.9 L1081.55,360.9 L1084.6,363.95 L1084.6,368.25 L1081.55,371.3 L1077.25,371.3 L1074.2,368.25 L1074.2,363.95Z"/>
<path d="M1075.15,392.75 L1083.65,392.75 L1089.65,398.75 L1089.65,407.25 L1083.65,413.25 L1075.15,413.25 L1069.15,407.25 L1069.15,398.75ZM1077.25,397.8 L1081.55,397.8 L1084.6,400.85 L1084.6,405.15 L1081.55,408.2 L1077.25,408.2 L1074.2,405.15 L1074.2,400.85Z"/>
<path d="M1075.15,449.15 L1083.65,449.15 L1089.65,455.15 L1089.65,463.65 L1083.65,469.65 L1075.15,469.65 L1069.15,463.65 L1069.15,455.15ZM1077.25,454.2 L1081.55,454.2 L1084.6,457.25 L1084.6,461.55 L1081.55,464.6 L1077.25,464.6 L1074.2,461.55 L1074.2,457.25Z"/>
<path d="M1075.15,486.65 L1083.65,486.65 L1089.65,492.65 L1089.65,501.15 L1083.65,507.15 L1075.15,507.15 L1069.15,501.15 L1069.15,492.65ZM1077.25,491.7 L1081.55,491.7 L1084.6,494.75 L1084.6,499.05 L1081.55,502.1 L1077.25,502.1 L1074.2,499.05 L1074.2,494.75Z"/>
<path d="M1094.33,150.7 L1102.87,150.7 L1108.9,156.73 L1108.9,165.27 L1102.87,171.3 L1094.33,171.3 L1088.3,165.27 L1088.3,156.73ZM1096.36,155.6 L1100.84,155.6 L1104,158.76 L1104,163.24 L1100.84,166.4 L1096.36,166.4 L1093.2,163.24 L1093.2,158.76Z"/>
<path d="M1056.73,187 L1065.27,187 L1071.3,193.03 L1071.3,201.57 L1065.27,207.6 L1056.73,207.6 L1050.7,201.57 L1050.7,193.03ZM1058.76,191.9 L1063.24,191.9 L1066.4,195.06 L1066.4,199.54 L1063.24,202.7 L1058.76,202.7 L1055.6,199.54 L1055.6,195.06Z"/>
<path d="M1132.23,187 L1140.77,187 L1146.8,193.03 L1146.8,201.57 L1140.77,207.6 L1132.23,207.6 L1126.2,201.57 L1126.2,193.03ZM1134.26,191.9 L1138.74,191.9 L1141.9,195.06 L1141.9,199.54 L1138.74,202.7 L1134.26,202.7 L1131.1,199.54 L1131.1,195.06Z"/>
<path d="M346.73,635.4 L355.27,635.4 L361.3,641.43 L361.3,649.97 L355.27,656 L346.73,656 L340.7,649.97 L340.7,641.43ZM348.76,640.3 L353.24,640.3 L356.4,643.46 L356.4,647.94 L353.24,651.1 L348.76,651.1 L345.6,647.94 L345.6,643.46Z"/>
<path d="M421.73,635.4 L430.27,635.4 L436.3,641.43 L436.3,649.97 L430.27,656 L421.73,656 L415.7,649.97 L415.7,641.43ZM423.76,640.3 L428.24,640.3 L431.4,643.46 L431.4,647.94 L428.24,651.1 L423.76,651.1 L420.6,647.94 L420.6,643.46Z"/>
<path d="M384.43,672.7 L392.97,672.7 L399,678.73 L399,687.27 L392.97,693.3 L384.43,693.3 L378.4,687.27 L378.4,678.73ZM386.46,677.6 L390.94,677.6 L394.1,680.76 L394.1,685.24 L390.94,688.4 L386.46,688.4 L383.3,685.24 L383.3,680.76Z"/>
<path d="M477.13,635.4 L485.67,635.4 L491.7,641.43 L491.7,649.97 L485.67,656 L477.13,656 L471.1,649.97 L471.1,641.43ZM479.16,640.3 L483.64,640.3 L486.8,643.46 L486.8,647.94 L483.64,651.1 L479.16,651.1 L476,647.94 L476,643.46Z"/>
<path d="M552.13,635.4 L560.67,635.4 L566.7,641.43 L566.7,649.97 L560.67,656 L552.13,656 L546.1,649.97 L546.1,641.43ZM554.16,640.3 L558.64,640.3 L561.8,643.46 L561.8,647.94 L558.64,651.1 L554.16,651.1 L551,647.94 L551,643.46Z"/>
<path d="M514.83,672.7 L523.37,672.7 L529.4,678.73 L529.4,687.27 L523.37,693.3 L514.83,693.3 L508.8,687.27 L508.8,678.73ZM516.86,677.6 L521.34,677.6 L524.5,680.76 L524.5,685.24 L521.34,688.4 L516.86,688.4 L513.7,685.24 L513.7,680.76Z"/>
<path d="M357.7,497.1 a14.3,14.3 0 1 0 28.6,0 a14.3,14.3 0 1 0 -28.6,0ZM364.6,497.1 a7.4,7.4 0 1 0 14.8,0 a7.4,7.4 0 1 0 -14.8,0Z"/>
<path d="M430.2,469.4 a14.3,14.3 0 1 0 28.6,0 a14.3,14.3 0 1 0 -28.6,0ZM437.1,469.4 a7.4,7.4 0 1 0 14.8,0 a7.4,7.4 0 1 0 -14.8,0Z"/>
<path d="M459.6,497.1 a14.3,14.3 0 1 0 28.6,0 a14.3,14.3 0 1 0 -28.6,0ZM466.5,497.1 a7.4,7.4 0 1 0 14.8,0 a7.4,7.4 0 1 0 -14.8,0Z"/>
<path d="M430.2,523.9 a14.3,14.3 0 1 0 28.6,0 a14.3,14.3 0 1 0 -28.6,0ZM437.1,523.9 a7.4,7.4 0 1 0 14.8,0 a7.4,7.4 0 1 0 -14.8,0Z"/>
<path d="M963.56,543 L971.84,543 L977.7,548.86 L977.7,557.14 L971.84,563 L963.56,563 L957.7,557.14 L957.7,548.86ZM966.04,549 L969.36,549 L971.7,551.34 L971.7,554.66 L969.36,557 L966.04,557 L963.7,554.66 L963.7,551.34Z"/>
<path d="M1038.26,543 L1046.54,543 L1052.4,548.86 L1052.4,557.14 L1046.54,563 L1038.26,563 L1032.4,557.14 L1032.4,548.86ZM1040.74,549 L1044.06,549 L1046.4,551.34 L1046.4,554.66 L1044.06,557 L1040.74,557 L1038.4,554.66 L1038.4,551.34Z"/>
<path d="M1067,540 H1093 V566 H1067ZM1077.93,548 L1082.07,548 L1085,550.93 L1085,555.07 L1082.07,558 L1077.93,558 L1075,555.07 L1075,550.93Z"/>
<path d="M1103.9,553 a13.5,13.5 0 1 0 27,0 a13.5,13.5 0 1 0 -27,0ZM1115.23,547.75 L1119.57,547.75 L1122.65,550.83 L1122.65,555.17 L1119.57,558.25 L1115.23,558.25 L1112.15,555.17 L1112.15,550.83Z"/>
</g>
<g opacity="0.73" font-family="Liberation Sans">
<rect x="295.6" y="128.5" width="858.9" height="629.5" fill="none" stroke="#e6e6e6" stroke-width="1.6"/>
<line x1="351" y1="146" x2="351" y2="186" stroke="#e6e6e6" stroke-width="1" stroke-linecap="butt"/>
<line x1="336" y1="161" x2="368" y2="161" stroke="#e6e6e6" stroke-width="1" stroke-linecap="butt"/>
<path d="M410.5,161.3 H382.8 V422.8 H468.4 V161.3 H441.5 A15.5,15.5 0 0 1 410.5,161.3" stroke="#e6e6e6" stroke-width="2.4" fill="none" stroke-linejoin="round" stroke-linecap="round"/>
<path d="M546,178 H566.5 L575.9,187.5 L585.3,178 H604 L613.5,187.5 V208 L604,217.5 H585.3 L575.9,208 L566.5,217.5 H546 L536.6,208 V187.5 Z" stroke="#e6e6e6" stroke-width="2.4" fill="none" stroke-linejoin="round" stroke-linecap="round"/>
<rect x="706" y="153.7" width="113" height="81.7" rx="0" fill="none" stroke="#e6e6e6" stroke-width="2.4"/>
<path d="M725,235.4 V216.6 H800 V235.4" stroke="#e6e6e6" stroke-width="2.4" fill="none" stroke-linejoin="round" stroke-linecap="round"/>
<path d="M543.8,285.6 H607 L614.8,305 A39.6,39.6 0 1 1 536,305 Z" stroke="#e6e6e6" stroke-width="2.4" fill="none" stroke-linejoin="round" stroke-linecap="round"/>
<line x1="536" y1="306" x2="615" y2="306" stroke="#e6e6e6" stroke-width="1.8" stroke-dasharray="5,3"/>
<path d="M599.4,384.5 A31,31 0 1 0 599.4,423.3 Z" stroke="#e6e6e6" stroke-width="2.6" fill="none" stroke-linejoin="round" stroke-linecap="round"/>
<circle cx="575.2" cy="403.9" r="23.3" fill="none" stroke="#e6e6e6" stroke-width="2.2"/>
<path d="M564.32,398.83 A12,12 0 0 1 572.09,392.31" fill="none" stroke="#e6e6e6" stroke-width="2" stroke-linecap="round"/>
<path d="M560.25,396.93 A16.5,16.5 0 0 1 570.93,387.96" fill="none" stroke="#e6e6e6" stroke-width="2" stroke-linecap="round"/>
<path d="M586.08,408.97 A12,12 0 0 1 578.31,415.49" fill="none" stroke="#e6e6e6" stroke-width="2" stroke-linecap="round"/>
<path d="M590.15,410.87 A16.5,16.5 0 0 1 579.47,419.84" fill="none" stroke="#e6e6e6" stroke-width="2" stroke-linecap="round"/>
<line x1="575.2" y1="390" x2="575.2" y2="420" stroke="#e6e6e6" stroke-width="1" stroke-linecap="butt"/>
<line x1="557" y1="403.9" x2="594.7" y2="403.9" stroke="#e6e6e6" stroke-width="1.2" stroke-linecap="butt"/>
<rect x="689.4" y="287" width="71.1" height="45.8" rx="4" fill="none" stroke="#e6e6e6" stroke-width="2.4"/>
<line x1="706" y1="310.4" x2="743.9" y2="310.4" stroke="#e6e6e6" stroke-width="2" stroke-linecap="round"/>
<line x1="721.15" y1="297.9" x2="721.15" y2="322.9" stroke="#e6e6e6" stroke-width="4" stroke-linecap="round"/>
<line x1="728.75" y1="297.9" x2="728.75" y2="322.9" stroke="#e6e6e6" stroke-width="4" stroke-linecap="round"/>
<rect x="969" y="381.4" width="72" height="44.5" rx="4" fill="none" stroke="#e6e6e6" stroke-width="2.4"/>
<line x1="985.5" y1="403.6" x2="1024" y2="403.6" stroke="#e6e6e6" stroke-width="2" stroke-linecap="round"/>
<line x1="1000.95" y1="391.1" x2="1000.95" y2="416.1" stroke="#e6e6e6" stroke-width="4" stroke-linecap="round"/>
<line x1="1008.55" y1="391.1" x2="1008.55" y2="416.1" stroke="#e6e6e6" stroke-width="4" stroke-linecap="round"/>
<rect x="969.5" y="437" width="72" height="44.2" rx="4" fill="none" stroke="#e6e6e6" stroke-width="2.4"/>
<line x1="986.2" y1="459.4" x2="1024" y2="459.4" stroke="#e6e6e6" stroke-width="2" stroke-linecap="round"/>
<line x1="1001.3" y1="446.9" x2="1001.3" y2="471.9" stroke="#e6e6e6" stroke-width="4" stroke-linecap="round"/>
<line x1="1008.9" y1="446.9" x2="1008.9" y2="471.9" stroke="#e6e6e6" stroke-width="4" stroke-linecap="round"/>
<rect x="539.7" y="474" width="72.7" height="45.3" rx="4" fill="none" stroke="#e6e6e6" stroke-width="2.4"/>
<line x1="557.4" y1="497" x2="594.7" y2="497" stroke="#e6e6e6" stroke-width="2" stroke-linecap="round"/>
<line x1="572.25" y1="484.5" x2="572.25" y2="509.5" stroke="#e6e6e6" stroke-width="4" stroke-linecap="round"/>
<line x1="579.85" y1="484.5" x2="579.85" y2="509.5" stroke="#e6e6e6" stroke-width="4" stroke-linecap="round"/>
<rect x="1062" y="605" width="71.9" height="44" rx="4" fill="none" stroke="#e6e6e6" stroke-width="2.4"/>
<line x1="1080" y1="627.4" x2="1117.4" y2="627.4" stroke="#e6e6e6" stroke-width="2" stroke-linecap="round"/>
<line x1="1094.9" y1="614.9" x2="1094.9" y2="639.9" stroke="#e6e6e6" stroke-width="4" stroke-linecap="round"/>
<line x1="1102.5" y1="614.9" x2="1102.5" y2="639.9" stroke="#e6e6e6" stroke-width="4" stroke-linecap="round"/>
<line x1="967.9" y1="197.8" x2="1005.6" y2="197.8" stroke="#e6e6e6" stroke-width="5.6" stroke-linecap="butt"/>
<circle cx="967.9" cy="197.8" r="5.4" fill="#e6e6e6"/>
<circle cx="1005.6" cy="197.8" r="5.4" fill="#e6e6e6"/>
<line x1="967.9" y1="197.8" x2="977.9" y2="197.8" stroke="#e6e6e6" stroke-width="10" stroke-linecap="butt"/>
<line x1="995.6" y1="197.8" x2="1005.6" y2="197.8" stroke="#e6e6e6" stroke-width="10" stroke-linecap="butt"/>
<circle cx="982.15" cy="197.8" r="4.4" fill="#e6e6e6"/>
<circle cx="991.35" cy="197.8" r="4.4" fill="#e6e6e6"/>
<circle cx="1005.6" cy="197.8" r="18.4" fill="none" stroke="#e6e6e6" stroke-width="2.2"/>
<circle cx="1005.6" cy="197.8" r="15.4" fill="none" stroke="#e6e6e6" stroke-width="1.7"/>
<line x1="968" y1="254.4" x2="1005.4" y2="254.4" stroke="#e6e6e6" stroke-width="5.6" stroke-linecap="butt"/>
<circle cx="968" cy="254.4" r="5.4" fill="#e6e6e6"/>
<circle cx="1005.4" cy="254.4" r="5.4" fill="#e6e6e6"/>
<line x1="968" y1="254.4" x2="978" y2="254.4" stroke="#e6e6e6" stroke-width="10" stroke-linecap="butt"/>
<line x1="995.4" y1="254.4" x2="1005.4" y2="254.4" stroke="#e6e6e6" stroke-width="10" stroke-linecap="butt"/>
<circle cx="982.1" cy="254.4" r="4.4" fill="#e6e6e6"/>
<circle cx="991.3" cy="254.4" r="4.4" fill="#e6e6e6"/>
<circle cx="1005.4" cy="254.4" r="18.4" fill="none" stroke="#e6e6e6" stroke-width="2.2"/>
<circle cx="1005.4" cy="254.4" r="15.4" fill="none" stroke="#e6e6e6" stroke-width="1.7"/>
<line x1="705.8" y1="384.6" x2="743" y2="384.6" stroke="#e6e6e6" stroke-width="5.6" stroke-linecap="butt"/>
<circle cx="705.8" cy="384.6" r="5.4" fill="#e6e6e6"/>
<circle cx="743" cy="384.6" r="5.4" fill="#e6e6e6"/>
<line x1="705.8" y1="384.6" x2="715.8" y2="384.6" stroke="#e6e6e6" stroke-width="10" stroke-linecap="butt"/>
<line x1="733" y1="384.6" x2="743" y2="384.6" stroke="#e6e6e6" stroke-width="10" stroke-linecap="butt"/>
<circle cx="719.8" cy="384.6" r="4.4" fill="#e6e6e6"/>
<circle cx="729" cy="384.6" r="4.4" fill="#e6e6e6"/>
<circle cx="705.8" cy="384.6" r="18.4" fill="none" stroke="#e6e6e6" stroke-width="2.2"/>
<circle cx="705.8" cy="384.6" r="15.4" fill="none" stroke="#e6e6e6" stroke-width="1.7"/>
<line x1="688.2" y1="515.1" x2="724.5" y2="515.1" stroke="#e6e6e6" stroke-width="5.6" stroke-linecap="butt"/>
<circle cx="688.2" cy="515.1" r="5.4" fill="#e6e6e6"/>
<circle cx="724.5" cy="515.1" r="5.4" fill="#e6e6e6"/>
<line x1="688.2" y1="515.1" x2="698.2" y2="515.1" stroke="#e6e6e6" stroke-width="10" stroke-linecap="butt"/>
<line x1="714.5" y1="515.1" x2="724.5" y2="515.1" stroke="#e6e6e6" stroke-width="10" stroke-linecap="butt"/>
<circle cx="701.75" cy="515.1" r="4.4" fill="#e6e6e6"/>
<circle cx="710.95" cy="515.1" r="4.4" fill="#e6e6e6"/>
<circle cx="688.2" cy="515.1" r="18.4" fill="none" stroke="#e6e6e6" stroke-width="2.2"/>
<circle cx="688.2" cy="515.1" r="15.4" fill="none" stroke="#e6e6e6" stroke-width="1.7"/>
<line x1="688.2" y1="571.2" x2="724.5" y2="571.2" stroke="#e6e6e6" stroke-width="5.6" stroke-linecap="butt"/>
<circle cx="688.2" cy="571.2" r="5.4" fill="#e6e6e6"/>
<circle cx="724.5" cy="571.2" r="5.4" fill="#e6e6e6"/>
<line x1="688.2" y1="571.2" x2="698.2" y2="571.2" stroke="#e6e6e6" stroke-width="10" stroke-linecap="butt"/>
<line x1="714.5" y1="571.2" x2="724.5" y2="571.2" stroke="#e6e6e6" stroke-width="10" stroke-linecap="butt"/>
<circle cx="701.75" cy="571.2" r="4.4" fill="#e6e6e6"/>
<circle cx="710.95" cy="571.2" r="4.4" fill="#e6e6e6"/>
<circle cx="688.2" cy="571.2" r="18.4" fill="none" stroke="#e6e6e6" stroke-width="2.2"/>
<circle cx="688.2" cy="571.2" r="15.4" fill="none" stroke="#e6e6e6" stroke-width="1.7"/>
<line x1="613.4" y1="627.1" x2="649.6" y2="627.1" stroke="#e6e6e6" stroke-width="5.6" stroke-linecap="butt"/>
<circle cx="613.4" cy="627.1" r="5.4" fill="#e6e6e6"/>
<circle cx="649.6" cy="627.1" r="5.4" fill="#e6e6e6"/>
<line x1="613.4" y1="627.1" x2="623.4" y2="627.1" stroke="#e6e6e6" stroke-width="10" stroke-linecap="butt"/>
<line x1="639.6" y1="627.1" x2="649.6" y2="627.1" stroke="#e6e6e6" stroke-width="10" stroke-linecap="butt"/>
<circle cx="626.9" cy="627.1" r="4.4" fill="#e6e6e6"/>
<circle cx="636.1" cy="627.1" r="4.4" fill="#e6e6e6"/>
<circle cx="649.6" cy="627.1" r="18.4" fill="none" stroke="#e6e6e6" stroke-width="2.2"/>
<circle cx="649.6" cy="627.1" r="15.4" fill="none" stroke="#e6e6e6" stroke-width="1.7"/>
<line x1="687.9" y1="627.1" x2="725.2" y2="627.1" stroke="#e6e6e6" stroke-width="5.6" stroke-linecap="butt"/>
<circle cx="687.9" cy="627.1" r="5.4" fill="#e6e6e6"/>
<circle cx="725.2" cy="627.1" r="5.4" fill="#e6e6e6"/>
<line x1="687.9" y1="627.1" x2="697.9" y2="627.1" stroke="#e6e6e6" stroke-width="10" stroke-linecap="butt"/>
<line x1="715.2" y1="627.1" x2="725.2" y2="627.1" stroke="#e6e6e6" stroke-width="10" stroke-linecap="butt"/>
<circle cx="701.95" cy="627.1" r="4.4" fill="#e6e6e6"/>
<circle cx="711.15" cy="627.1" r="4.4" fill="#e6e6e6"/>
<circle cx="725.2" cy="627.1" r="18.4" fill="none" stroke="#e6e6e6" stroke-width="2.2"/>
<circle cx="725.2" cy="627.1" r="15.4" fill="none" stroke="#e6e6e6" stroke-width="1.7"/>
<line x1="613.4" y1="683" x2="649.6" y2="683" stroke="#e6e6e6" stroke-width="5.6" stroke-linecap="butt"/>
<circle cx="613.4" cy="683" r="5.4" fill="#e6e6e6"/>
<circle cx="649.6" cy="683" r="5.4" fill="#e6e6e6"/>
<line x1="613.4" y1="683" x2="623.4" y2="683" stroke="#e6e6e6" stroke-width="10" stroke-linecap="butt"/>
<line x1="639.6" y1="683" x2="649.6" y2="683" stroke="#e6e6e6" stroke-width="10" stroke-linecap="butt"/>
<circle cx="626.9" cy="683" r="4.4" fill="#e6e6e6"/>
<circle cx="636.1" cy="683" r="4.4" fill="#e6e6e6"/>
<circle cx="613.4" cy="683" r="18.4" fill="none" stroke="#e6e6e6" stroke-width="2.2"/>
<circle cx="613.4" cy="683" r="15.4" fill="none" stroke="#e6e6e6" stroke-width="1.7"/>
<line x1="687.9" y1="683" x2="725.2" y2="683" stroke="#e6e6e6" stroke-width="5.6" stroke-linecap="butt"/>
<circle cx="687.9" cy="683" r="5.4" fill="#e6e6e6"/>
<circle cx="725.2" cy="683" r="5.4" fill="#e6e6e6"/>
<line x1="687.9" y1="683" x2="697.9" y2="683" stroke="#e6e6e6" stroke-width="10" stroke-linecap="butt"/>
<line x1="715.2" y1="683" x2="725.2" y2="683" stroke="#e6e6e6" stroke-width="10" stroke-linecap="butt"/>
<circle cx="701.95" cy="683" r="4.4" fill="#e6e6e6"/>
<circle cx="711.15" cy="683" r="4.4" fill="#e6e6e6"/>
<circle cx="725.2" cy="683" r="18.4" fill="none" stroke="#e6e6e6" stroke-width="2.2"/>
<circle cx="725.2" cy="683" r="15.4" fill="none" stroke="#e6e6e6" stroke-width="1.7"/>
<line x1="892.8" y1="215.5" x2="892.8" y2="254.4" stroke="#e6e6e6" stroke-width="5.6" stroke-linecap="butt"/>
<circle cx="892.8" cy="215.5" r="5.4" fill="#e6e6e6"/>
<circle cx="892.8" cy="254.4" r="5.4" fill="#e6e6e6"/>
<line x1="892.8" y1="215.5" x2="892.8" y2="225.5" stroke="#e6e6e6" stroke-width="10" stroke-linecap="butt"/>
<line x1="892.8" y1="244.4" x2="892.8" y2="254.4" stroke="#e6e6e6" stroke-width="10" stroke-linecap="butt"/>
<circle cx="892.8" cy="230.35" r="4.4" fill="#e6e6e6"/>
<circle cx="892.8" cy="239.55" r="4.4" fill="#e6e6e6"/>
<circle cx="892.8" cy="215.5" r="18.4" fill="none" stroke="#e6e6e6" stroke-width="2.2"/>
<circle cx="892.8" cy="215.5" r="15.4" fill="none" stroke="#e6e6e6" stroke-width="1.7"/>
<line x1="1079.4" y1="366.1" x2="1079.4" y2="403" stroke="#e6e6e6" stroke-width="5.6" stroke-linecap="butt"/>
<circle cx="1079.4" cy="366.1" r="5.4" fill="#e6e6e6"/>
<circle cx="1079.4" cy="403" r="5.4" fill="#e6e6e6"/>
<line x1="1079.4" y1="366.1" x2="1079.4" y2="376.1" stroke="#e6e6e6" stroke-width="10" stroke-linecap="butt"/>
<line x1="1079.4" y1="393" x2="1079.4" y2="403" stroke="#e6e6e6" stroke-width="10" stroke-linecap="butt"/>
<circle cx="1079.4" cy="379.95" r="4.4" fill="#e6e6e6"/>
<circle cx="1079.4" cy="389.15" r="4.4" fill="#e6e6e6"/>
<circle cx="1079.4" cy="403" r="18.4" fill="none" stroke="#e6e6e6" stroke-width="2.2"/>
<circle cx="1079.4" cy="403" r="15.4" fill="none" stroke="#e6e6e6" stroke-width="1.7"/>
<line x1="1079.4" y1="459.4" x2="1079.4" y2="496.9" stroke="#e6e6e6" stroke-width="5.6" stroke-linecap="butt"/>
<circle cx="1079.4" cy="459.4" r="5.4" fill="#e6e6e6"/>
<circle cx="1079.4" cy="496.9" r="5.4" fill="#e6e6e6"/>
<line x1="1079.4" y1="459.4" x2="1079.4" y2="469.4" stroke="#e6e6e6" stroke-width="10" stroke-linecap="butt"/>
<line x1="1079.4" y1="486.9" x2="1079.4" y2="496.9" stroke="#e6e6e6" stroke-width="10" stroke-linecap="butt"/>
<circle cx="1079.4" cy="473.55" r="4.4" fill="#e6e6e6"/>
<circle cx="1079.4" cy="482.75" r="4.4" fill="#e6e6e6"/>
<circle cx="1079.4" cy="459.4" r="18.4" fill="none" stroke="#e6e6e6" stroke-width="2.2"/>
<circle cx="1079.4" cy="459.4" r="15.4" fill="none" stroke="#e6e6e6" stroke-width="1.7"/>
<path d="M840.8,291.1 H813.2 V440.5 H898.3 V291.1 H870.8 A15,15 0 0 1 840.8,291.1" stroke="#e6e6e6" stroke-width="2.4" fill="none" stroke-linejoin="round" stroke-linecap="round"/>
<rect x="782.2" y="484.9" width="146.2" height="171.8" rx="0" fill="none" stroke="#e6e6e6" stroke-width="2.4"/>
<rect x="1047.3" y="147.3" width="101.9" height="101.9" rx="5" fill="none" stroke="#e6e6e6" stroke-width="2.4"/>
<circle cx="1098.6" cy="198" r="30.5" fill="none" stroke="#e6e6e6" stroke-width="2"/>
<path d="M1092.3,174.5 L1104.9,174.5 L1104.9,191.7 L1122.1,191.7 L1122.1,204.3 L1104.9,204.3 L1104.9,221.5 L1092.3,221.5 L1092.3,204.3 L1075.1,204.3 L1075.1,191.7 L1092.3,191.7Z" stroke="#e6e6e6" stroke-width="2" fill="none" stroke-linejoin="round" stroke-linecap="round"/>
<line x1="1092.3" y1="182.5" x2="1104.9" y2="182.5" stroke="#e6e6e6" stroke-width="1.6" stroke-linecap="round"/>
<line x1="1092.3" y1="213.5" x2="1104.9" y2="213.5" stroke="#e6e6e6" stroke-width="1.6" stroke-linecap="round"/>
<line x1="1098.6" y1="190" x2="1098.6" y2="206" stroke="#e6e6e6" stroke-width="1" stroke-linecap="round"/>
<line x1="1090.6" y1="198" x2="1106.6" y2="198" stroke="#e6e6e6" stroke-width="1" stroke-linecap="round"/>
<line x1="1126.88" y1="226.28" x2="1131.13" y2="230.53" stroke="#e6e6e6" stroke-width="3.2" stroke-linecap="round"/>
<line x1="1070.32" y1="226.28" x2="1066.07" y2="230.53" stroke="#e6e6e6" stroke-width="3.2" stroke-linecap="round"/>
<line x1="1070.32" y1="169.72" x2="1066.07" y2="165.47" stroke="#e6e6e6" stroke-width="3.2" stroke-linecap="round"/>
<line x1="1126.88" y1="169.72" x2="1131.13" y2="165.47" stroke="#e6e6e6" stroke-width="3.2" stroke-linecap="round"/>
<rect x="1060" y="242.4" width="77.5" height="6.8" rx="0" fill="none" stroke="#e6e6e6" stroke-width="2"/>
<circle cx="1098.6" cy="161" r="1.8" fill="#e6e6e6"/>
<circle cx="1061" cy="197.3" r="1.8" fill="#e6e6e6"/>
<circle cx="1136.5" cy="197.3" r="1.8" fill="#e6e6e6"/>
<rect x="337.2" y="594.9" width="101.9" height="101.9" rx="5" fill="none" stroke="#e6e6e6" stroke-width="2.4"/>
<circle cx="388.5" cy="646.8" r="30.5" fill="none" stroke="#e6e6e6" stroke-width="2"/>
<path d="M382.2,623.3 L394.8,623.3 L394.8,640.5 L412,640.5 L412,653.1 L394.8,653.1 L394.8,670.3 L382.2,670.3 L382.2,653.1 L365,653.1 L365,640.5 L382.2,640.5Z" stroke="#e6e6e6" stroke-width="2" fill="none" stroke-linejoin="round" stroke-linecap="round"/>
<line x1="382.2" y1="631.3" x2="394.8" y2="631.3" stroke="#e6e6e6" stroke-width="1.6" stroke-linecap="round"/>
<line x1="382.2" y1="662.3" x2="394.8" y2="662.3" stroke="#e6e6e6" stroke-width="1.6" stroke-linecap="round"/>
<line x1="388.5" y1="638.8" x2="388.5" y2="654.8" stroke="#e6e6e6" stroke-width="1" stroke-linecap="round"/>
<line x1="380.5" y1="646.8" x2="396.5" y2="646.8" stroke="#e6e6e6" stroke-width="1" stroke-linecap="round"/>
<line x1="416.78" y1="675.08" x2="421.03" y2="679.33" stroke="#e6e6e6" stroke-width="3.2" stroke-linecap="round"/>
<line x1="360.22" y1="675.08" x2="355.97" y2="679.33" stroke="#e6e6e6" stroke-width="3.2" stroke-linecap="round"/>
<line x1="360.22" y1="618.52" x2="355.97" y2="614.27" stroke="#e6e6e6" stroke-width="3.2" stroke-linecap="round"/>
<line x1="416.78" y1="618.52" x2="421.03" y2="614.27" stroke="#e6e6e6" stroke-width="3.2" stroke-linecap="round"/>
<rect x="350.4" y="594.9" width="76.7" height="7" rx="0" fill="none" stroke="#e6e6e6" stroke-width="2"/>
<circle cx="351" cy="645.7" r="1.8" fill="#e6e6e6"/>
<circle cx="426" cy="645.7" r="1.8" fill="#e6e6e6"/>
<circle cx="388.7" cy="683" r="1.8" fill="#e6e6e6"/>
<rect x="467.6" y="594.9" width="101.9" height="101.9" rx="5" fill="none" stroke="#e6e6e6" stroke-width="2.4"/>
<circle cx="518.9" cy="646.8" r="30.5" fill="none" stroke="#e6e6e6" stroke-width="2"/>
<path d="M512.6,623.3 L525.2,623.3 L525.2,640.5 L542.4,640.5 L542.4,653.1 L525.2,653.1 L525.2,670.3 L512.6,670.3 L512.6,653.1 L495.4,653.1 L495.4,640.5 L512.6,640.5Z" stroke="#e6e6e6" stroke-width="2" fill="none" stroke-linejoin="round" stroke-linecap="round"/>
<line x1="512.6" y1="631.3" x2="525.2" y2="631.3" stroke="#e6e6e6" stroke-width="1.6" stroke-linecap="round"/>
<line x1="512.6" y1="662.3" x2="525.2" y2="662.3" stroke="#e6e6e6" stroke-width="1.6" stroke-linecap="round"/>
<line x1="518.9" y1="638.8" x2="518.9" y2="654.8" stroke="#e6e6e6" stroke-width="1" stroke-linecap="round"/>
<line x1="510.9" y1="646.8" x2="526.9" y2="646.8" stroke="#e6e6e6" stroke-width="1" stroke-linecap="round"/>
<line x1="547.18" y1="675.08" x2="551.43" y2="679.33" stroke="#e6e6e6" stroke-width="3.2" stroke-linecap="round"/>
<line x1="490.62" y1="675.08" x2="486.37" y2="679.33" stroke="#e6e6e6" stroke-width="3.2" stroke-linecap="round"/>
<line x1="490.62" y1="618.52" x2="486.37" y2="614.27" stroke="#e6e6e6" stroke-width="3.2" stroke-linecap="round"/>
<line x1="547.18" y1="618.52" x2="551.43" y2="614.27" stroke="#e6e6e6" stroke-width="3.2" stroke-linecap="round"/>
<rect x="480.8" y="594.9" width="76.7" height="7" rx="0" fill="none" stroke="#e6e6e6" stroke-width="2"/>
<circle cx="481.4" cy="645.7" r="1.8" fill="#e6e6e6"/>
<circle cx="556.4" cy="645.7" r="1.8" fill="#e6e6e6"/>
<circle cx="519.1" cy="683" r="1.8" fill="#e6e6e6"/>
<path d="M475.6,475.5 V460.8 H358.8 V534.3 H475.6 V517.9" stroke="#e6e6e6" stroke-width="2.4" fill="none" stroke-linejoin="round" stroke-linecap="round"/>
<path d="M358.8,472.4 H314.7 V524.8 H358.8" stroke="#e6e6e6" stroke-width="2.4" fill="none" stroke-linejoin="round" stroke-linecap="round"/>
<circle cx="406.9" cy="497.1" r="9.5" fill="none" stroke="#e6e6e6" stroke-width="1.1"/>
<line x1="406.9" y1="485" x2="406.9" y2="509" stroke="#e6e6e6" stroke-width="1.1" stroke-linecap="butt"/>
<line x1="395" y1="497.1" x2="419" y2="497.1" stroke="#e6e6e6" stroke-width="1.1" stroke-linecap="butt"/>
<rect x="984" y="539" width="42" height="27" rx="0" fill="none" stroke="#e6e6e6" stroke-width="2.4"/>
<rect x="1012" y="539" width="7" height="27" rx="0" fill="#e6e6e6"/>
<line x1="967.7" y1="553" x2="984" y2="553" stroke="#e6e6e6" stroke-width="2" stroke-linecap="round"/>
<line x1="1026" y1="553" x2="1042.4" y2="553" stroke="#e6e6e6" stroke-width="2" stroke-linecap="round"/>
<line x1="1005" y1="546" x2="1005" y2="560" stroke="#e6e6e6" stroke-width="1" stroke-linecap="round"/>
<line x1="998" y1="553" x2="1012" y2="553" stroke="#e6e6e6" stroke-width="1" stroke-linecap="round"/>
<circle cx="1100.9" cy="554" r="34.5" fill="none" stroke="#e6e6e6" stroke-width="2.2"/>
<line x1="726.3" y1="705" x2="726.3" y2="735" stroke="#e6e6e6" stroke-width="1" stroke-linecap="butt"/>
<line x1="710" y1="720.3" x2="742" y2="720.3" stroke="#e6e6e6" stroke-width="1" stroke-linecap="butt"/>
<line x1="295.6" y1="745" x2="295.6" y2="770" stroke="#fff" stroke-width="1" stroke-dasharray="1,1"/>
<line x1="283" y1="758" x2="310" y2="758" stroke="#fff" stroke-width="1" stroke-dasharray="1,1"/>
<text x="381" y="155.6" font-size="25.2" fill="#e6e6e6" textLength="239" lengthAdjust="spacingAndGlyphs">SWITCH:74HC4066</text>
<text x="539.4" y="171.5" font-size="25.2" fill="#e6e6e6" textLength="151.6" lengthAdjust="spacingAndGlyphs">POWER:JP1</text>
<text x="539" y="244.7" font-size="25.2" fill="#e6e6e6" textLength="99.8" lengthAdjust="spacingAndGlyphs">M02PTH</text>
<text x="948" y="183.7" font-size="25.2" fill="#e6e6e6" textLength="38" lengthAdjust="spacingAndGlyphs">10k</text>
<text x="862.5" y="231.5" font-size="25.2" fill="#e6e6e6" textLength="122.5" lengthAdjust="spacingAndGlyphs">TIMER:R4</text>
<text x="932" y="239.9" font-size="25.2" fill="#e6e6e6" textLength="50.6" lengthAdjust="spacingAndGlyphs">220k</text>
<text x="1053" y="142.3" font-size="25.2" fill="#e6e6e6" textLength="121.7" lengthAdjust="spacingAndGlyphs">TIMER:R5</text>
<text x="702" y="283.7" font-size="25.2" fill="#e6e6e6" textLength="120" lengthAdjust="spacingAndGlyphs">TIMER:C1</text>
<text x="816" y="287.9" font-size="25.2" fill="#e6e6e6" textLength="135" lengthAdjust="spacingAndGlyphs">TIMER:IC1</text>
<text x="864" y="287.9" font-size="25.2" fill="#e6e6e6" textLength="118.4" lengthAdjust="spacingAndGlyphs">TIMER:R1</text>
<text x="407.5" y="337.5" font-size="25.2" fill="#e6e6e6" textLength="120" lengthAdjust="spacingAndGlyphs">TIMER:T1</text>
<text x="700.6" y="355.4" font-size="25.2" fill="#e6e6e6" textLength="80" lengthAdjust="spacingAndGlyphs">0.01uF</text>
<text x="728.6" y="368.9" font-size="25.2" fill="#e6e6e6" textLength="117.4" lengthAdjust="spacingAndGlyphs">TIMER:R3</text>
<text x="604" y="397.9" font-size="25.2" fill="#e6e6e6" textLength="178" lengthAdjust="spacingAndGlyphs">SWITCH:LED1</text>
<text x="725.5" y="417.6" font-size="25.2" fill="#e6e6e6" textLength="38" lengthAdjust="spacingAndGlyphs">10k</text>
<text x="983.4" y="377.2" font-size="25.2" fill="#e6e6e6" textLength="120" lengthAdjust="spacingAndGlyphs">TIMER:C2</text>
<text x="984.3" y="434.1" font-size="25.2" fill="#e6e6e6" textLength="120" lengthAdjust="spacingAndGlyphs">TIMER:C3</text>
<text x="980.6" y="446.1" font-size="25.2" fill="#e6e6e6" textLength="64" lengthAdjust="spacingAndGlyphs">0.1uF</text>
<text x="981.5" y="505.2" font-size="25.2" fill="#e6e6e6" textLength="80" lengthAdjust="spacingAndGlyphs">470uF</text>
<text x="1090.5" y="510.7" font-size="16.5" fill="#e6e6e6" textLength="34" lengthAdjust="spacingAndGlyphs">10uF</text>
<text x="551" y="470.3" font-size="25.2" fill="#e6e6e6" textLength="195.3" lengthAdjust="spacingAndGlyphs">AUDIO_AMP:C1</text>
<text x="551" y="539.9" font-size="25.2" fill="#e6e6e6" textLength="64" lengthAdjust="spacingAndGlyphs">0.1uF</text>
<text x="705.8" y="500.3" font-size="25.2" fill="#e6e6e6" textLength="194.5" lengthAdjust="spacingAndGlyphs">AUDIO_AMP:R1</text>
<text x="708" y="548.9" font-size="25.2" fill="#e6e6e6" textLength="26" lengthAdjust="spacingAndGlyphs">1k</text>
<text x="705.8" y="556.3" font-size="25.2" fill="#e6e6e6" textLength="211" lengthAdjust="spacingAndGlyphs">AUDIO_AMP:R15</text>
<text x="833.8" y="589.5" font-size="25.2" fill="#e6e6e6" textLength="196" lengthAdjust="spacingAndGlyphs">AUDIO_AMP:D1</text>
<text x="707.9" y="605.3" font-size="25.2" fill="#e6e6e6" textLength="38" lengthAdjust="spacingAndGlyphs">10k</text>
<text x="667" y="612.7" font-size="25.2" fill="#e6e6e6" textLength="38" lengthAdjust="spacingAndGlyphs">47k</text>
<text x="592.6" y="612.7" font-size="25.2" fill="#e6e6e6" textLength="38" lengthAdjust="spacingAndGlyphs">10k</text>
<text x="431" y="660.9" font-size="25.2" fill="#e6e6e6" textLength="196" lengthAdjust="spacingAndGlyphs">AUDIO_AMP:R7</text>
<text x="499" y="660.9" font-size="25.2" fill="#e6e6e6" textLength="206" lengthAdjust="spacingAndGlyphs">AUDIO_AMP:R4</text>
<text x="632" y="668.6" font-size="25.2" fill="#e6e6e6" textLength="196" lengthAdjust="spacingAndGlyphs">AUDIO_AMP:R5</text>
<text x="671" y="665.9" font-size="25.2" fill="#e6e6e6" textLength="32" lengthAdjust="spacingAndGlyphs">47k</text>
<text x="924.6" y="671.9" font-size="25.2" fill="#e6e6e6" textLength="195.8" lengthAdjust="spacingAndGlyphs">AUDIO_AMP:C6</text>
<text x="236.4" y="720.1" font-size="25.2" fill="#e6e6e6" textLength="196" lengthAdjust="spacingAndGlyphs">AUDIO_AMP:R2</text>
<text x="367.5" y="718.9" font-size="25.2" fill="#e6e6e6" textLength="196" lengthAdjust="spacingAndGlyphs">AUDIO_AMP:R8</text>
<text x="511" y="714.6" font-size="25.2" fill="#e6e6e6" textLength="194.5" lengthAdjust="spacingAndGlyphs">AUDIO_AMP:R3</text>
<text x="630" y="714.6" font-size="25.2" fill="#e6e6e6" textLength="38" lengthAdjust="spacingAndGlyphs">10k</text>
<text x="347.1" y="738.7" font-size="25.2" fill="#e6e6e6" textLength="377" lengthAdjust="spacingAndGlyphs">AUDIO-SERVO BOARD 7/2014</text>
<text x="1047" y="581.9" font-size="9.5" fill="#e6e6e6" textLength="62" lengthAdjust="spacingAndGlyphs">AUDIO_AMP:C?</text>
<text x="1056" y="599.9" font-size="25.2" fill="#e6e6e6" textLength="64" lengthAdjust="spacingAndGlyphs">0.1uF</text>
<text transform="translate(434.7,223) rotate(-90)" x="0" y="0" font-size="25.2" fill="#e6e6e6" textLength="26" lengthAdjust="spacingAndGlyphs">U1</text>
<text transform="translate(926,376) rotate(-90)" x="0" y="0" font-size="25.2" fill="#e6e6e6" textLength="142" lengthAdjust="spacingAndGlyphs">SWITCH:R3</text>
<text transform="translate(865,390.8) rotate(-90)" x="0" y="0" font-size="25.2" fill="#e6e6e6" textLength="76.8" lengthAdjust="spacingAndGlyphs">NE555</text>
<text transform="translate(1064.6,383.7) rotate(-90)" x="0" y="0" font-size="25.2" fill="#e6e6e6" textLength="121.7" lengthAdjust="spacingAndGlyphs">TIMER:R2</text>
<text transform="translate(1112.6,383.7) rotate(-90)" x="0" y="0" font-size="25.2" fill="#e6e6e6" textLength="47" lengthAdjust="spacingAndGlyphs">4.7k</text>
<text transform="translate(1065,523.7) rotate(-90)" x="0" y="0" font-size="25.2" fill="#e6e6e6" textLength="46" lengthAdjust="spacingAndGlyphs">2.2k</text>
<text transform="translate(1112.5,688.8) rotate(-90)" x="0" y="0" font-size="25.2" fill="#e6e6e6" textLength="211.8" lengthAdjust="spacingAndGlyphs">AUDIO_AMP:R4</text>
<text transform="translate(952,723.5) rotate(-90)" x="0" y="0" font-size="25.2" fill="#e6e6e6" textLength="233.7" lengthAdjust="spacingAndGlyphs">AUDIO_AMP:AMP1</text>
<text transform="translate(952,682) rotate(-90)" x="0" y="0" font-size="25.2" fill="#e6e6e6" textLength="96" lengthAdjust="spacingAndGlyphs">MC1458</text>
<text x="1056" y="239.3" font-size="17" fill="#e6e6e6" textLength="9" lengthAdjust="spacingAndGlyphs">1</text>
<text x="1131" y="239.3" font-size="17" fill="#e6e6e6" textLength="10" lengthAdjust="spacingAndGlyphs">3</text>
<text x="342" y="620.9" font-size="17" fill="#e6e6e6" textLength="10" lengthAdjust="spacingAndGlyphs">3</text>
<text x="420" y="620.9" font-size="17" fill="#e6e6e6" textLength="9" lengthAdjust="spacingAndGlyphs">1</text>
<text x="472.4" y="620.9" font-size="17" fill="#e6e6e6" textLength="10" lengthAdjust="spacingAndGlyphs">3</text>
<text x="550.4" y="620.9" font-size="17" fill="#e6e6e6" textLength="9" lengthAdjust="spacingAndGlyphs">1</text>
<text x="546" y="329.3" font-size="25" fill="#e6e6e6" textLength="8" lengthAdjust="spacingAndGlyphs">1</text>
<text x="570.7" y="338.4" font-size="25" fill="#e6e6e6" textLength="12.5" lengthAdjust="spacingAndGlyphs">2</text>
<text x="593" y="329.3" font-size="25" fill="#e6e6e6" textLength="12.5" lengthAdjust="spacingAndGlyphs">3</text>
<text transform="translate(807,521.3) rotate(-90)" x="0" y="0" font-size="21" fill="#e6e6e6" textLength="12" lengthAdjust="spacingAndGlyphs">1</text>
<text transform="translate(807,559) rotate(-90)" x="0" y="0" font-size="21" fill="#e6e6e6" textLength="12" lengthAdjust="spacingAndGlyphs">2</text>
<text transform="translate(807,596.5) rotate(-90)" x="0" y="0" font-size="21" fill="#e6e6e6" textLength="12" lengthAdjust="spacingAndGlyphs">3</text>
<text transform="translate(807,633.1) rotate(-90)" x="0" y="0" font-size="21" fill="#e6e6e6" textLength="12" lengthAdjust="spacingAndGlyphs">4</text>
</g>
<g fill="#33c733" fill-opacity="0.72" fill-rule="evenodd">
<path d="M361.25,169.6 H378.75 A10,10 0 0 1 388.75,179.6 V179.6 A10,10 0 0 1 378.75,189.6 H361.25 A10,10 0 0 1 351.25,179.6 V179.6 A10,10 0 0 1 361.25,169.6ZM370,174.35 L373.71,175.89 L375.25,179.6 L373.71,183.31 L370,184.85 L366.29,183.31 L364.75,179.6 L366.29,175.89Z"/>
<path d="M361.25,206.9 H378.75 A10,10 0 0 1 388.75,216.9 V216.9 A10,10 0 0 1 378.75,226.9 H361.25 A10,10 0 0 1 351.25,216.9 V216.9 A10,10 0 0 1 361.25,206.9ZM370,211.65 L373.71,213.19 L375.25,216.9 L373.71,220.61 L370,222.15 L366.29,220.61 L364.75,216.9 L366.29,213.19Z"/>
<path d="M361.25,244.3 H378.75 A10,10 0 0 1 388.75,254.3 V254.3 A10,10 0 0 1 378.75,264.3 H361.25 A10,10 0 0 1 351.25,254.3 V254.3 A10,10 0 0 1 361.25,244.3ZM370,249.05 L373.71,250.59 L375.25,254.3 L373.71,258.01 L370,259.55 L366.29,258.01 L364.75,254.3 L366.29,250.59Z"/>
<path d="M361.25,281.6 H378.75 A10,10 0 0 1 388.75,291.6 V291.6 A10,10 0 0 1 378.75,301.6 H361.25 A10,10 0 0 1 351.25,291.6 V291.6 A10,10 0 0 1 361.25,281.6ZM370,286.35 L373.71,287.89 L375.25,291.6 L373.71,295.31 L370,296.85 L366.29,295.31 L364.75,291.6 L366.29,287.89Z"/>
<path d="M361.25,319 H378.75 A10,10 0 0 1 388.75,329 V329 A10,10 0 0 1 378.75,339 H361.25 A10,10 0 0 1 351.25,329 V329 A10,10 0 0 1 361.25,319ZM370,323.75 L373.71,325.29 L375.25,329 L373.71,332.71 L370,334.25 L366.29,332.71 L364.75,329 L366.29,325.29Z"/>
<path d="M361.25,356.3 H378.75 A10,10 0 0 1 388.75,366.3 V366.3 A10,10 0 0 1 378.75,376.3 H361.25 A10,10 0 0 1 351.25,366.3 V366.3 A10,10 0 0 1 361.25,356.3ZM370,361.05 L373.71,362.59 L375.25,366.3 L373.71,370.01 L370,371.55 L366.29,370.01 L364.75,366.3 L366.29,362.59Z"/>
<path d="M361.25,393.7 H378.75 A10,10 0 0 1 388.75,403.7 V403.7 A10,10 0 0 1 378.75,413.7 H361.25 A10,10 0 0 1 351.25,403.7 V403.7 A10,10 0 0 1 361.25,393.7ZM370,398.45 L373.71,399.99 L375.25,403.7 L373.71,407.41 L370,408.95 L366.29,407.41 L364.75,403.7 L366.29,399.99Z"/>
<path d="M473.25,169.6 H490.75 A10,10 0 0 1 500.75,179.6 V179.6 A10,10 0 0 1 490.75,189.6 H473.25 A10,10 0 0 1 463.25,179.6 V179.6 A10,10 0 0 1 473.25,169.6ZM482,174.35 L485.71,175.89 L487.25,179.6 L485.71,183.31 L482,184.85 L478.29,183.31 L476.75,179.6 L478.29,175.89Z"/>
<path d="M473.25,206.9 H490.75 A10,10 0 0 1 500.75,216.9 V216.9 A10,10 0 0 1 490.75,226.9 H473.25 A10,10 0 0 1 463.25,216.9 V216.9 A10,10 0 0 1 473.25,206.9ZM482,211.65 L485.71,213.19 L487.25,216.9 L485.71,220.61 L482,222.15 L478.29,220.61 L476.75,216.9 L478.29,213.19Z"/>
<path d="M473.25,244.3 H490.75 A10,10 0 0 1 500.75,254.3 V254.3 A10,10 0 0 1 490.75,264.3 H473.25 A10,10 0 0 1 463.25,254.3 V254.3 A10,10 0 0 1 473.25,244.3ZM482,249.05 L485.71,250.59 L487.25,254.3 L485.71,258.01 L482,259.55 L478.29,258.01 L476.75,254.3 L478.29,250.59Z"/>
<path d="M473.25,281.6 H490.75 A10,10 0 0 1 500.75,291.6 V291.6 A10,10 0 0 1 490.75,301.6 H473.25 A10,10 0 0 1 463.25,291.6 V291.6 A10,10 0 0 1 473.25,281.6ZM482,286.35 L485.71,287.89 L487.25,291.6 L485.71,295.31 L482,296.85 L478.29,295.31 L476.75,291.6 L478.29,287.89Z"/>
<path d="M473.25,319 H490.75 A10,10 0 0 1 500.75,329 V329 A10,10 0 0 1 490.75,339 H473.25 A10,10 0 0 1 463.25,329 V329 A10,10 0 0 1 473.25,319ZM482,323.75 L485.71,325.29 L487.25,329 L485.71,332.71 L482,334.25 L478.29,332.71 L476.75,329 L478.29,325.29Z"/>
<path d="M473.25,356.3 H490.75 A10,10 0 0 1 500.75,366.3 V366.3 A10,10 0 0 1 490.75,376.3 H473.25 A10,10 0 0 1 463.25,366.3 V366.3 A10,10 0 0 1 473.25,356.3ZM482,361.05 L485.71,362.59 L487.25,366.3 L485.71,370.01 L482,371.55 L478.29,370.01 L476.75,366.3 L478.29,362.59Z"/>
<path d="M473.25,393.7 H490.75 A10,10 0 0 1 500.75,403.7 V403.7 A10,10 0 0 1 490.75,413.7 H473.25 A10,10 0 0 1 463.25,403.7 V403.7 A10,10 0 0 1 473.25,393.7ZM482,398.45 L485.71,399.99 L487.25,403.7 L485.71,407.41 L482,408.95 L478.29,407.41 L476.75,403.7 L478.29,399.99Z"/>
<path d="M790.95,299.8 H808.45 A10,10 0 0 1 818.45,309.8 V309.8 A10,10 0 0 1 808.45,319.8 H790.95 A10,10 0 0 1 780.95,309.8 V309.8 A10,10 0 0 1 790.95,299.8ZM799.7,304.55 L803.41,306.09 L804.95,309.8 L803.41,313.51 L799.7,315.05 L795.99,313.51 L794.45,309.8 L795.99,306.09Z"/>
<path d="M790.95,337.2 H808.45 A10,10 0 0 1 818.45,347.2 V347.2 A10,10 0 0 1 808.45,357.2 H790.95 A10,10 0 0 1 780.95,347.2 V347.2 A10,10 0 0 1 790.95,337.2ZM799.7,341.95 L803.41,343.49 L804.95,347.2 L803.41,350.91 L799.7,352.45 L795.99,350.91 L794.45,347.2 L795.99,343.49Z"/>
<path d="M790.95,374.6 H808.45 A10,10 0 0 1 818.45,384.6 V384.6 A10,10 0 0 1 808.45,394.6 H790.95 A10,10 0 0 1 780.95,384.6 V384.6 A10,10 0 0 1 790.95,374.6ZM799.7,379.35 L803.41,380.89 L804.95,384.6 L803.41,388.31 L799.7,389.85 L795.99,388.31 L794.45,384.6 L795.99,380.89Z"/>
<path d="M790.95,412 H808.45 A10,10 0 0 1 818.45,422 V422 A10,10 0 0 1 808.45,432 H790.95 A10,10 0 0 1 780.95,422 V422 A10,10 0 0 1 790.95,412ZM799.7,416.75 L803.41,418.29 L804.95,422 L803.41,425.71 L799.7,427.25 L795.99,425.71 L794.45,422 L795.99,418.29Z"/>
<path d="M903.05,299.8 H920.55 A10,10 0 0 1 930.55,309.8 V309.8 A10,10 0 0 1 920.55,319.8 H903.05 A10,10 0 0 1 893.05,309.8 V309.8 A10,10 0 0 1 903.05,299.8ZM911.8,304.55 L915.51,306.09 L917.05,309.8 L915.51,313.51 L911.8,315.05 L908.09,313.51 L906.55,309.8 L908.09,306.09Z"/>
<path d="M903.05,337.2 H920.55 A10,10 0 0 1 930.55,347.2 V347.2 A10,10 0 0 1 920.55,357.2 H903.05 A10,10 0 0 1 893.05,347.2 V347.2 A10,10 0 0 1 903.05,337.2ZM911.8,341.95 L915.51,343.49 L917.05,347.2 L915.51,350.91 L911.8,352.45 L908.09,350.91 L906.55,347.2 L908.09,343.49Z"/>
<path d="M903.05,374.6 H920.55 A10,10 0 0 1 930.55,384.6 V384.6 A10,10 0 0 1 920.55,394.6 H903.05 A10,10 0 0 1 893.05,384.6 V384.6 A10,10 0 0 1 903.05,374.6ZM911.8,379.35 L915.51,380.89 L917.05,384.6 L915.51,388.31 L911.8,389.85 L908.09,388.31 L906.55,384.6 L908.09,380.89Z"/>
<path d="M903.05,412 H920.55 A10,10 0 0 1 930.55,422 V422 A10,10 0 0 1 920.55,432 H903.05 A10,10 0 0 1 893.05,422 V422 A10,10 0 0 1 903.05,412ZM911.8,416.75 L915.51,418.29 L917.05,422 L915.51,425.71 L911.8,427.25 L908.09,425.71 L906.55,422 L908.09,418.29Z"/>
<path d="M788.2,504.3 H810 A11,11 0 0 1 821,515.3 V515.3 A11,11 0 0 1 810,526.3 H788.2 A11,11 0 0 1 777.2,515.3 V515.3 A11,11 0 0 1 788.2,504.3ZM799.1,510.05 L802.81,511.59 L804.35,515.3 L802.81,519.01 L799.1,520.55 L795.39,519.01 L793.85,515.3 L795.39,511.59Z"/>
<path d="M788.2,542 H810 A11,11 0 0 1 821,553 V553 A11,11 0 0 1 810,564 H788.2 A11,11 0 0 1 777.2,553 V553 A11,11 0 0 1 788.2,542ZM799.1,547.75 L802.81,549.29 L804.35,553 L802.81,556.71 L799.1,558.25 L795.39,556.71 L793.85,553 L795.39,549.29Z"/>
<path d="M788.2,579.5 H810 A11,11 0 0 1 821,590.5 V590.5 A11,11 0 0 1 810,601.5 H788.2 A11,11 0 0 1 777.2,590.5 V590.5 A11,11 0 0 1 788.2,579.5ZM799.1,585.25 L802.81,586.79 L804.35,590.5 L802.81,594.21 L799.1,595.75 L795.39,594.21 L793.85,590.5 L795.39,586.79Z"/>
<path d="M788.2,616.1 H810 A11,11 0 0 1 821,627.1 V627.1 A11,11 0 0 1 810,638.1 H788.2 A11,11 0 0 1 777.2,627.1 V627.1 A11,11 0 0 1 788.2,616.1ZM799.1,621.85 L802.81,623.39 L804.35,627.1 L802.81,630.81 L799.1,632.35 L795.39,630.81 L793.85,627.1 L795.39,623.39Z"/>
<path d="M900.8,504.3 H922.6 A11,11 0 0 1 933.6,515.3 V515.3 A11,11 0 0 1 922.6,526.3 H900.8 A11,11 0 0 1 889.8,515.3 V515.3 A11,11 0 0 1 900.8,504.3ZM911.7,510.05 L915.41,511.59 L916.95,515.3 L915.41,519.01 L911.7,520.55 L907.99,519.01 L906.45,515.3 L907.99,511.59Z"/>
<path d="M900.8,542 H922.6 A11,11 0 0 1 933.6,553 V553 A11,11 0 0 1 922.6,564 H900.8 A11,11 0 0 1 889.8,553 V553 A11,11 0 0 1 900.8,542ZM911.7,547.75 L915.41,549.29 L916.95,553 L915.41,556.71 L911.7,558.25 L907.99,556.71 L906.45,553 L907.99,549.29Z"/>
<path d="M900.8,579.5 H922.6 A11,11 0 0 1 933.6,590.5 V590.5 A11,11 0 0 1 922.6,601.5 H900.8 A11,11 0 0 1 889.8,590.5 V590.5 A11,11 0 0 1 900.8,579.5ZM911.7,585.25 L915.41,586.79 L916.95,590.5 L915.41,594.21 L911.7,595.75 L907.99,594.21 L906.45,590.5 L907.99,586.79Z"/>
<path d="M900.8,616.1 H922.6 A11,11 0 0 1 933.6,627.1 V627.1 A11,11 0 0 1 922.6,638.1 H900.8 A11,11 0 0 1 889.8,627.1 V627.1 A11,11 0 0 1 900.8,616.1ZM911.7,621.85 L915.41,623.39 L916.95,627.1 L915.41,630.81 L911.7,632.35 L907.99,630.81 L906.45,627.1 L907.99,623.39Z"/>
<path d="M542.7,197.8 a14.5,14.5 0 1 0 29,0 a14.5,14.5 0 1 0 -29,0ZM549.9,197.8 a7.3,7.3 0 1 0 14.6,0 a7.3,7.3 0 1 0 -14.6,0Z"/>
<path d="M580.2,197.8 a14.5,14.5 0 1 0 29,0 a14.5,14.5 0 1 0 -29,0ZM587.4,197.8 a7.3,7.3 0 1 0 14.6,0 a7.3,7.3 0 1 0 -14.6,0Z"/>
<path d="M710.5,183.5 H739.5 V212.5 H710.5ZM718,198 a7,7 0 1 0 14,0 a7,7 0 1 0 -14,0Z"/>
<path d="M747.5,198 a14.5,14.5 0 1 0 29,0 a14.5,14.5 0 1 0 -29,0ZM755.5,198 a6.5,6.5 0 1 0 13,0 a6.5,6.5 0 1 0 -13,0Z"/>
<path d="M785.2,198 a14.5,14.5 0 1 0 29,0 a14.5,14.5 0 1 0 -29,0ZM793.2,198 a6.5,6.5 0 1 0 13,0 a6.5,6.5 0 1 0 -13,0Z"/>
<path d="M552.89,299.9 L561.51,299.9 L567.6,305.99 L567.6,314.61 L561.51,320.7 L552.89,320.7 L546.8,314.61 L546.8,305.99ZM555.34,305.8 L559.06,305.8 L561.7,308.44 L561.7,312.16 L559.06,314.8 L555.34,314.8 L552.7,312.16 L552.7,308.44Z"/>
<path d="M590.09,299.9 L598.71,299.9 L604.8,305.99 L604.8,314.61 L598.71,320.7 L590.09,320.7 L584,314.61 L584,305.99ZM592.54,305.8 L596.26,305.8 L598.9,308.44 L598.9,312.16 L596.26,314.8 L592.54,314.8 L589.9,312.16 L589.9,308.44Z"/>
<path d="M571.09,327.1 L579.71,327.1 L585.8,333.19 L585.8,341.81 L579.71,347.9 L571.09,347.9 L565,341.81 L565,333.19ZM573.54,333 L577.26,333 L579.9,335.64 L579.9,339.36 L577.26,342 L573.54,342 L570.9,339.36 L570.9,335.64Z"/>
<path d="M552.61,393.3 L561.39,393.3 L567.6,399.51 L567.6,408.29 L561.39,414.5 L552.61,414.5 L546.4,408.29 L546.4,399.51ZM554.93,398.9 L559.07,398.9 L562,401.83 L562,405.97 L559.07,408.9 L554.93,408.9 L552,405.97 L552,401.83Z"/>
<path d="M590.31,393.3 L599.09,393.3 L605.3,399.51 L605.3,408.29 L599.09,414.5 L590.31,414.5 L584.1,408.29 L584.1,399.51ZM592.63,398.9 L596.77,398.9 L599.7,401.83 L599.7,405.97 L596.77,408.9 L592.63,408.9 L589.7,405.97 L589.7,401.83Z"/>
<path d="M700.93,298.15 L711.07,298.15 L718.25,305.33 L718.25,315.47 L711.07,322.65 L700.93,322.65 L693.75,315.47 L693.75,305.33ZM703.58,304.55 L708.42,304.55 L711.85,307.98 L711.85,312.82 L708.42,316.25 L703.58,316.25 L700.15,312.82 L700.15,307.98Z"/>
<path d="M738.83,298.15 L748.97,298.15 L756.15,305.33 L756.15,315.47 L748.97,322.65 L738.83,322.65 L731.65,315.47 L731.65,305.33ZM741.48,304.55 L746.32,304.55 L749.75,307.98 L749.75,312.82 L746.32,316.25 L741.48,316.25 L738.05,312.82 L738.05,307.98Z"/>
<path d="M980.43,391.35 L990.57,391.35 L997.75,398.53 L997.75,408.67 L990.57,415.85 L980.43,415.85 L973.25,408.67 L973.25,398.53ZM983.08,397.75 L987.92,397.75 L991.35,401.18 L991.35,406.02 L987.92,409.45 L983.08,409.45 L979.65,406.02 L979.65,401.18Z"/>
<path d="M1018.93,391.35 L1029.07,391.35 L1036.25,398.53 L1036.25,408.67 L1029.07,415.85 L1018.93,415.85 L1011.75,408.67 L1011.75,398.53ZM1021.58,397.75 L1026.42,397.75 L1029.85,401.18 L1029.85,406.02 L1026.42,409.45 L1021.58,409.45 L1018.15,406.02 L1018.15,401.18Z"/>
<path d="M981.13,447.15 L991.27,447.15 L998.45,454.33 L998.45,464.47 L991.27,471.65 L981.13,471.65 L973.95,464.47 L973.95,454.33ZM983.78,453.55 L988.62,453.55 L992.05,456.98 L992.05,461.82 L988.62,465.25 L983.78,465.25 L980.35,461.82 L980.35,456.98Z"/>
<path d="M1018.93,447.15 L1029.07,447.15 L1036.25,454.33 L1036.25,464.47 L1029.07,471.65 L1018.93,471.65 L1011.75,464.47 L1011.75,454.33ZM1021.58,453.55 L1026.42,453.55 L1029.85,456.98 L1029.85,461.82 L1026.42,465.25 L1021.58,465.25 L1018.15,461.82 L1018.15,456.98Z"/>
<path d="M552.33,484.75 L562.47,484.75 L569.65,491.93 L569.65,502.07 L562.47,509.25 L552.33,509.25 L545.15,502.07 L545.15,491.93ZM554.98,491.15 L559.82,491.15 L563.25,494.58 L563.25,499.42 L559.82,502.85 L554.98,502.85 L551.55,499.42 L551.55,494.58Z"/>
<path d="M589.63,484.75 L599.77,484.75 L606.95,491.93 L606.95,502.07 L599.77,509.25 L589.63,509.25 L582.45,502.07 L582.45,491.93ZM592.28,491.15 L597.12,491.15 L600.55,494.58 L600.55,499.42 L597.12,502.85 L592.28,502.85 L588.85,499.42 L588.85,494.58Z"/>
<path d="M1074.93,615.15 L1085.07,615.15 L1092.25,622.33 L1092.25,632.47 L1085.07,639.65 L1074.93,639.65 L1067.75,632.47 L1067.75,622.33ZM1077.58,621.55 L1082.42,621.55 L1085.85,624.98 L1085.85,629.82 L1082.42,633.25 L1077.58,633.25 L1074.15,629.82 L1074.15,624.98Z"/>
<path d="M1112.33,615.15 L1122.47,615.15 L1129.65,622.33 L1129.65,632.47 L1122.47,639.65 L1112.33,639.65 L1105.15,632.47 L1105.15,622.33ZM1114.98,621.55 L1119.82,621.55 L1123.25,624.98 L1123.25,629.82 L1119.82,633.25 L1114.98,633.25 L1111.55,629.82 L1111.55,624.98Z"/>
<path d="M963.65,187.55 L972.15,187.55 L978.15,193.55 L978.15,202.05 L972.15,208.05 L963.65,208.05 L957.65,202.05 L957.65,193.55ZM965.75,192.6 L970.05,192.6 L973.1,195.65 L973.1,199.95 L970.05,203 L965.75,203 L962.7,199.95 L962.7,195.65Z"/>
<path d="M1001.35,187.55 L1009.85,187.55 L1015.85,193.55 L1015.85,202.05 L1009.85,208.05 L1001.35,208.05 L995.35,202.05 L995.35,193.55ZM1003.45,192.6 L1007.75,192.6 L1010.8,195.65 L1010.8,199.95 L1007.75,203 L1003.45,203 L1000.4,199.95 L1000.4,195.65Z"/>
<path d="M963.75,244.15 L972.25,244.15 L978.25,250.15 L978.25,258.65 L972.25,264.65 L963.75,264.65 L957.75,258.65 L957.75,250.15ZM965.85,249.2 L970.15,249.2 L973.2,252.25 L973.2,256.55 L970.15,259.6 L965.85,259.6 L962.8,256.55 L962.8,252.25Z"/>
<path d="M1001.15,244.15 L1009.65,244.15 L1015.65,250.15 L1015.65,258.65 L1009.65,264.65 L1001.15,264.65 L995.15,258.65 L995.15,250.15ZM1003.25,249.2 L1007.55,249.2 L1010.6,252.25 L1010.6,256.55 L1007.55,259.6 L1003.25,259.6 L1000.2,256.55 L1000.2,252.25Z"/>
<path d="M701.55,374.35 L710.05,374.35 L716.05,380.35 L716.05,388.85 L710.05,394.85 L701.55,394.85 L695.55,388.85 L695.55,380.35ZM703.65,379.4 L707.95,379.4 L711,382.45 L711,386.75 L707.95,389.8 L703.65,389.8 L700.6,386.75 L700.6,382.45Z"/>
<path d="M738.75,374.35 L747.25,374.35 L753.25,380.35 L753.25,388.85 L747.25,394.85 L738.75,394.85 L732.75,388.85 L732.75,380.35ZM740.85,379.4 L745.15,379.4 L748.2,382.45 L748.2,386.75 L745.15,389.8 L740.85,389.8 L737.8,386.75 L737.8,382.45Z"/>
<path d="M683.95,504.85 L692.45,504.85 L698.45,510.85 L698.45,519.35 L692.45,525.35 L683.95,525.35 L677.95,519.35 L677.95,510.85ZM686.05,509.9 L690.35,509.9 L693.4,512.95 L693.4,517.25 L690.35,520.3 L686.05,520.3 L683,517.25 L683,512.95Z"/>
<path d="M720.25,504.85 L728.75,504.85 L734.75,510.85 L734.75,519.35 L728.75,525.35 L720.25,525.35 L714.25,519.35 L714.25,510.85ZM722.35,509.9 L726.65,509.9 L729.7,512.95 L729.7,517.25 L726.65,520.3 L722.35,520.3 L719.3,517.25 L719.3,512.95Z"/>
<path d="M683.95,560.95 L692.45,560.95 L698.45,566.95 L698.45,575.45 L692.45,581.45 L683.95,581.45 L677.95,575.45 L677.95,566.95ZM686.05,566 L690.35,566 L693.4,569.05 L693.4,573.35 L690.35,576.4 L686.05,576.4 L683,573.35 L683,569.05Z"/>
<path d="M720.25,560.95 L728.75,560.95 L734.75,566.95 L734.75,575.45 L728.75,581.45 L720.25,581.45 L714.25,575.45 L714.25,566.95ZM722.35,566 L726.65,566 L729.7,569.05 L729.7,573.35 L726.65,576.4 L722.35,576.4 L719.3,573.35 L719.3,569.05Z"/>
<path d="M609.15,616.85 L617.65,616.85 L623.65,622.85 L623.65,631.35 L617.65,637.35 L609.15,637.35 L603.15,631.35 L603.15,622.85ZM611.25,621.9 L615.55,621.9 L618.6,624.95 L618.6,629.25 L615.55,632.3 L611.25,632.3 L608.2,629.25 L608.2,624.95Z"/>
<path d="M645.35,616.85 L653.85,616.85 L659.85,622.85 L659.85,631.35 L653.85,637.35 L645.35,637.35 L639.35,631.35 L639.35,622.85ZM647.45,621.9 L651.75,621.9 L654.8,624.95 L654.8,629.25 L651.75,632.3 L647.45,632.3 L644.4,629.25 L644.4,624.95Z"/>
<path d="M683.65,616.85 L692.15,616.85 L698.15,622.85 L698.15,631.35 L692.15,637.35 L683.65,637.35 L677.65,631.35 L677.65,622.85ZM685.75,621.9 L690.05,621.9 L693.1,624.95 L693.1,629.25 L690.05,632.3 L685.75,632.3 L682.7,629.25 L682.7,624.95Z"/>
<path d="M720.95,616.85 L729.45,616.85 L735.45,622.85 L735.45,631.35 L729.45,637.35 L720.95,637.35 L714.95,631.35 L714.95,622.85ZM723.05,621.9 L727.35,621.9 L730.4,624.95 L730.4,629.25 L727.35,632.3 L723.05,632.3 L720,629.25 L720,624.95Z"/>
<path d="M609.15,672.75 L617.65,672.75 L623.65,678.75 L623.65,687.25 L617.65,693.25 L609.15,693.25 L603.15,687.25 L603.15,678.75ZM611.25,677.8 L615.55,677.8 L618.6,680.85 L618.6,685.15 L615.55,688.2 L611.25,688.2 L608.2,685.15 L608.2,680.85Z"/>
<path d="M645.35,672.75 L653.85,672.75 L659.85,678.75 L659.85,687.25 L653.85,693.25 L645.35,693.25 L639.35,687.25 L639.35,678.75ZM647.45,677.8 L651.75,677.8 L654.8,680.85 L654.8,685.15 L651.75,688.2 L647.45,688.2 L644.4,685.15 L644.4,680.85Z"/>
<path d="M683.65,672.75 L692.15,672.75 L698.15,678.75 L698.15,687.25 L692.15,693.25 L683.65,693.25 L677.65,687.25 L677.65,678.75ZM685.75,677.8 L690.05,677.8 L693.1,680.85 L693.1,685.15 L690.05,688.2 L685.75,688.2 L682.7,685.15 L682.7,680.85Z"/>
<path d="M720.95,672.75 L729.45,672.75 L735.45,678.75 L735.45,687.25 L729.45,693.25 L720.95,693.25 L714.95,687.25 L714.95,678.75ZM723.05,677.8 L727.35,677.8 L730.4,680.85 L730.4,685.15 L727.35,688.2 L723.05,688.2 L720,685.15 L720,680.85Z"/>
<path d="M888.55,205.25 L897.05,205.25 L903.05,211.25 L903.05,219.75 L897.05,225.75 L888.55,225.75 L882.55,219.75 L882.55,211.25ZM890.65,210.3 L894.95,210.3 L898,213.35 L898,217.65 L894.95,220.7 L890.65,220.7 L887.6,217.65 L887.6,213.35Z"/>
<path d="M888.55,244.15 L897.05,244.15 L903.05,250.15 L903.05,258.65 L897.05,264.65 L888.55,264.65 L882.55,258.65 L882.55,250.15ZM890.65,249.2 L894.95,249.2 L898,252.25 L898,256.55 L894.95,259.6 L890.65,259.6 L887.6,256.55 L887.6,252.25Z"/>
<path d="M1075.15,355.85 L1083.65,355.85 L1089.65,361.85 L1089.65,370.35 L1083.65,376.35 L1075.15,376.35 L1069.15,370.35 L1069.15,361.85ZM1077.25,360.9 L1081.55,360.9 L1084.6,363.95 L1084.6,368.25 L1081.55,371.3 L1077.25,371.3 L1074.2,368.25 L1074.2,363.95Z"/>
<path d="M1075.15,392.75 L1083.65,392.75 L1089.65,398.75 L1089.65,407.25 L1083.65,413.25 L1075.15,413.25 L1069.15,407.25 L1069.15,398.75ZM1077.25,397.8 L1081.55,397.8 L1084.6,400.85 L1084.6,405.15 L1081.55,408.2 L1077.25,408.2 L1074.2,405.15 L1074.2,400.85Z"/>
<path d="M1075.15,449.15 L1083.65,449.15 L1089.65,455.15 L1089.65,463.65 L1083.65,469.65 L1075.15,469.65 L1069.15,463.65 L1069.15,455.15ZM1077.25,454.2 L1081.55,454.2 L1084.6,457.25 L1084.6,461.55 L1081.55,464.6 L1077.25,464.6 L1074.2,461.55 L1074.2,457.25Z"/>
<path d="M1075.15,486.65 L1083.65,486.65 L1089.65,492.65 L1089.65,501.15 L1083.65,507.15 L1075.15,507.15 L1069.15,501.15 L1069.15,492.65ZM1077.25,491.7 L1081.55,491.7 L1084.6,494.75 L1084.6,499.05 L1081.55,502.1 L1077.25,502.1 L1074.2,499.05 L1074.2,494.75Z"/>
<path d="M1094.33,150.7 L1102.87,150.7 L1108.9,156.73 L1108.9,165.27 L1102.87,171.3 L1094.33,171.3 L1088.3,165.27 L1088.3,156.73ZM1096.36,155.6 L1100.84,155.6 L1104,158.76 L1104,163.24 L1100.84,166.4 L1096.36,166.4 L1093.2,163.24 L1093.2,158.76Z"/>
<path d="M1056.73,187 L1065.27,187 L1071.3,193.03 L1071.3,201.57 L1065.27,207.6 L1056.73,207.6 L1050.7,201.57 L1050.7,193.03ZM1058.76,191.9 L1063.24,191.9 L1066.4,195.06 L1066.4,199.54 L1063.24,202.7 L1058.76,202.7 L1055.6,199.54 L1055.6,195.06Z"/>
<path d="M1132.23,187 L1140.77,187 L1146.8,193.03 L1146.8,201.57 L1140.77,207.6 L1132.23,207.6 L1126.2,201.57 L1126.2,193.03ZM1134.26,191.9 L1138.74,191.9 L1141.9,195.06 L1141.9,199.54 L1138.74,202.7 L1134.26,202.7 L1131.1,199.54 L1131.1,195.06Z"/>
<path d="M346.73,635.4 L355.27,635.4 L361.3,641.43 L361.3,649.97 L355.27,656 L346.73,656 L340.7,649.97 L340.7,641.43ZM348.76,640.3 L353.24,640.3 L356.4,643.46 L356.4,647.94 L353.24,651.1 L348.76,651.1 L345.6,647.94 L345.6,643.46Z"/>
<path d="M421.73,635.4 L430.27,635.4 L436.3,641.43 L436.3,649.97 L430.27,656 L421.73,656 L415.7,649.97 L415.7,641.43ZM423.76,640.3 L428.24,640.3 L431.4,643.46 L431.4,647.94 L428.24,651.1 L423.76,651.1 L420.6,647.94 L420.6,643.46Z"/>
<path d="M384.43,672.7 L392.97,672.7 L399,678.73 L399,687.27 L392.97,693.3 L384.43,693.3 L378.4,687.27 L378.4,678.73ZM386.46,677.6 L390.94,677.6 L394.1,680.76 L394.1,685.24 L390.94,688.4 L386.46,688.4 L383.3,685.24 L383.3,680.76Z"/>
<path d="M477.13,635.4 L485.67,635.4 L491.7,641.43 L491.7,649.97 L485.67,656 L477.13,656 L471.1,649.97 L471.1,641.43ZM479.16,640.3 L483.64,640.3 L486.8,643.46 L486.8,647.94 L483.64,651.1 L479.16,651.1 L476,647.94 L476,643.46Z"/>
<path d="M552.13,635.4 L560.67,635.4 L566.7,641.43 L566.7,649.97 L560.67,656 L552.13,656 L546.1,649.97 L546.1,641.43ZM554.16,640.3 L558.64,640.3 L561.8,643.46 L561.8,647.94 L558.64,651.1 L554.16,651.1 L551,647.94 L551,643.46Z"/>
<path d="M514.83,672.7 L523.37,672.7 L529.4,678.73 L529.4,687.27 L523.37,693.3 L514.83,693.3 L508.8,687.27 L508.8,678.73ZM516.86,677.6 L521.34,677.6 L524.5,680.76 L524.5,685.24 L521.34,688.4 L516.86,688.4 L513.7,685.24 L513.7,680.76Z"/>
<path d="M357.7,497.1 a14.3,14.3 0 1 0 28.6,0 a14.3,14.3 0 1 0 -28.6,0ZM364.6,497.1 a7.4,7.4 0 1 0 14.8,0 a7.4,7.4 0 1 0 -14.8,0Z"/>
<path d="M430.2,469.4 a14.3,14.3 0 1 0 28.6,0 a14.3,14.3 0 1 0 -28.6,0ZM437.1,469.4 a7.4,7.4 0 1 0 14.8,0 a7.4,7.4 0 1 0 -14.8,0Z"/>
<path d="M459.6,497.1 a14.3,14.3 0 1 0 28.6,0 a14.3,14.3 0 1 0 -28.6,0ZM466.5,497.1 a7.4,7.4 0 1 0 14.8,0 a7.4,7.4 0 1 0 -14.8,0Z"/>
<path d="M430.2,523.9 a14.3,14.3 0 1 0 28.6,0 a14.3,14.3 0 1 0 -28.6,0ZM437.1,523.9 a7.4,7.4 0 1 0 14.8,0 a7.4,7.4 0 1 0 -14.8,0Z"/>
<path d="M963.56,543 L971.84,543 L977.7,548.86 L977.7,557.14 L971.84,563 L963.56,563 L957.7,557.14 L957.7,548.86ZM966.04,549 L969.36,549 L971.7,551.34 L971.7,554.66 L969.36,557 L966.04,557 L963.7,554.66 L963.7,551.34Z"/>
<path d="M1038.26,543 L1046.54,543 L1052.4,548.86 L1052.4,557.14 L1046.54,563 L1038.26,563 L1032.4,557.14 L1032.4,548.86ZM1040.74,549 L1044.06,549 L1046.4,551.34 L1046.4,554.66 L1044.06,557 L1040.74,557 L1038.4,554.66 L1038.4,551.34Z"/>
<path d="M1067,540 H1093 V566 H1067ZM1077.93,548 L1082.07,548 L1085,550.93 L1085,555.07 L1082.07,558 L1077.93,558 L1075,555.07 L1075,550.93Z"/>
<path d="M1103.9,553 a13.5,13.5 0 1 0 27,0 a13.5,13.5 0 1 0 -27,0ZM1115.23,547.75 L1119.57,547.75 L1122.65,550.83 L1122.65,555.17 L1119.57,558.25 L1115.23,558.25 L1112.15,555.17 L1112.15,550.83Z"/>
</g>
<rect x="553.7" y="194.3" width="7" height="7" rx="1" fill="#b4b4e0"/>
<rect x="591.2" y="194.3" width="7" height="7" rx="1" fill="#d0a8a8"/>
<circle cx="762" cy="198" r="3.5" fill="#a02828"/>
<g stroke="#8e8c40" stroke-width="1.1" fill="none">
<line x1="370" y1="179.6" x2="594.7" y2="403.9"/>
<line x1="482" y1="216.9" x2="482" y2="254.3"/>
<line x1="482" y1="254.3" x2="688.2" y2="571.2"/>
<line x1="482" y1="291.6" x2="911.8" y2="347.2"/>
<line x1="482" y1="329" x2="892.8" y2="215.5"/>
<line x1="725" y1="198" x2="594.4" y2="310.3"/>
<line x1="725" y1="198" x2="967.9" y2="197.8"/>
<line x1="892.8" y1="215.5" x2="1098.6" y2="161"/>
<line x1="557" y1="403.9" x2="892.8" y2="215.5"/>
<line x1="575.4" y1="337.5" x2="705.8" y2="384.6"/>
<line x1="706" y1="310.4" x2="911.8" y2="422"/>
<line x1="799.7" y1="347.2" x2="985.5" y2="403.6"/>
<line x1="911.8" y1="347.2" x2="1079.4" y2="366.1"/>
<line x1="985.5" y1="403.6" x2="1079.4" y2="403"/>
<line x1="1061" y1="197.3" x2="1005.4" y2="254.4"/>
<line x1="1136.5" y1="197.3" x2="1079.4" y2="366.1"/>
<line x1="473.9" y1="497.1" x2="557.4" y2="497"/>
<line x1="444.5" y1="523.9" x2="687.9" y2="627.1"/>
<line x1="594.7" y1="497" x2="688.2" y2="515.1"/>
<line x1="724.5" y1="515.1" x2="799.1" y2="553"/>
<line x1="724.5" y1="515.1" x2="426" y2="645.7"/>
<line x1="799.1" y1="515.3" x2="911.7" y2="590.5"/>
<line x1="799.1" y1="515.3" x2="481.5" y2="645.7"/>
<line x1="426" y1="645.7" x2="1079.4" y2="459.4"/>
<line x1="351" y1="645.7" x2="388.7" y2="683"/>
<line x1="481.5" y1="645.7" x2="519.2" y2="683"/>
<line x1="519.2" y1="683" x2="687.9" y2="683"/>
<line x1="556.6" y1="645.7" x2="613.4" y2="627.1"/>
<line x1="613.4" y1="683" x2="911.7" y2="627.1"/>
<line x1="687.9" y1="683" x2="911.7" y2="515.3"/>
<line x1="687.9" y1="627.1" x2="799.1" y2="590.5"/>
<line x1="557.2" y1="310.3" x2="706" y2="310.4"/>
<line x1="743" y1="384.6" x2="799.7" y2="384.6"/>
<line x1="911.7" y1="515.3" x2="1080" y2="627.4"/>
<line x1="911.7" y1="553" x2="967.7" y2="553"/>
<line x1="1042.4" y1="553" x2="1080" y2="553"/>
<line x1="1080" y1="553" x2="1079.4" y2="496.9"/>
<line x1="388.7" y1="683" x2="799.1" y2="553"/>
</g>
<path d="M53,99V829M71.67,99V829M90.35,99V829M109.03,99V829M127.7,99V829M146.38,99V829M165.05,99V829M183.72,99V829M202.4,99V829M221.08,99V829M239.75,99V829M258.43,99V829M277.1,99V829M295.77,99V829M314.45,99V829M333.12,99V829M351.8,99V829M370.48,99V829M389.15,99V829M407.82,99V829M426.5,99V829M445.18,99V829M463.85,99V829M482.53,99V829M501.2,99V829M519.88,99V829M538.55,99V829M557.23,99V829M575.9,99V829M594.58,99V829M613.25,99V829M631.93,99V829M650.6,99V829M669.27,99V829M687.95,99V829M706.62,99V829M725.3,99V829M743.98,99V829M762.65,99V829M781.33,99V829M800,99V829M818.68,99V829M837.35,99V829M856.02,99V829M874.7,99V829M893.38,99V829M912.05,99V829M930.73,99V829M949.4,99V829M968.08,99V829M986.75,99V829M1005.43,99V829M1024.1,99V829M1042.78,99V829M1061.45,99V829M1080.12,99V829M1098.8,99V829M1117.48,99V829M1136.15,99V829M1154.83,99V829M1173.5,99V829M1192.17,99V829M1210.85,99V829M1229.53,99V829M1248.2,99V829M1266.88,99V829M1285.55,99V829M1304.23,99V829M1322.9,99V829M1341.58,99V829M1360.25,99V829M1378.92,99V829M1397.6,99V829M1416.28,99V829M1434.95,99V829M1453.62,99V829M1472.3,99V829M1490.98,99V829M1509.65,99V829M1528.33,99V829M1547,99V829M1565.67,99V829M42,105.5H1586M42,124.14H1586M42,142.79H1586M42,161.44H1586M42,180.08H1586M42,198.72H1586M42,217.37H1586M42,236.01H1586M42,254.66H1586M42,273.31H1586M42,291.95H1586M42,310.6H1586M42,329.24H1586M42,347.88H1586M42,366.53H1586M42,385.18H1586M42,403.82H1586M42,422.46H1586M42,441.11H1586M42,459.75H1586M42,478.4H1586M42,497.05H1586M42,515.69H1586M42,534.34H1586M42,552.98H1586M42,571.62H1586M42,590.27H1586M42,608.91H1586M42,627.56H1586M42,646.21H1586M42,664.85H1586M42,683.5H1586M42,702.14H1586M42,720.78H1586M42,739.43H1586M42,758.07H1586M42,776.72H1586M42,795.37H1586M42,814.01H1586" stroke="#646464" stroke-opacity="0.42" stroke-width="1" fill="none"/>
</g></svg>
<div id="wm" style="position:absolute;left:1281px;top:815px;font:bold 35px 'Liberation Sans',sans-serif;letter-spacing:0px;white-space:nowrap;transform-origin:0 0;transform:scaleX(1.0);"><span style="color:rgba(86,160,70,0.58)">lime</span><span style="color:rgba(86,86,86,0.58)">download.com</span></div>
</body></html>
